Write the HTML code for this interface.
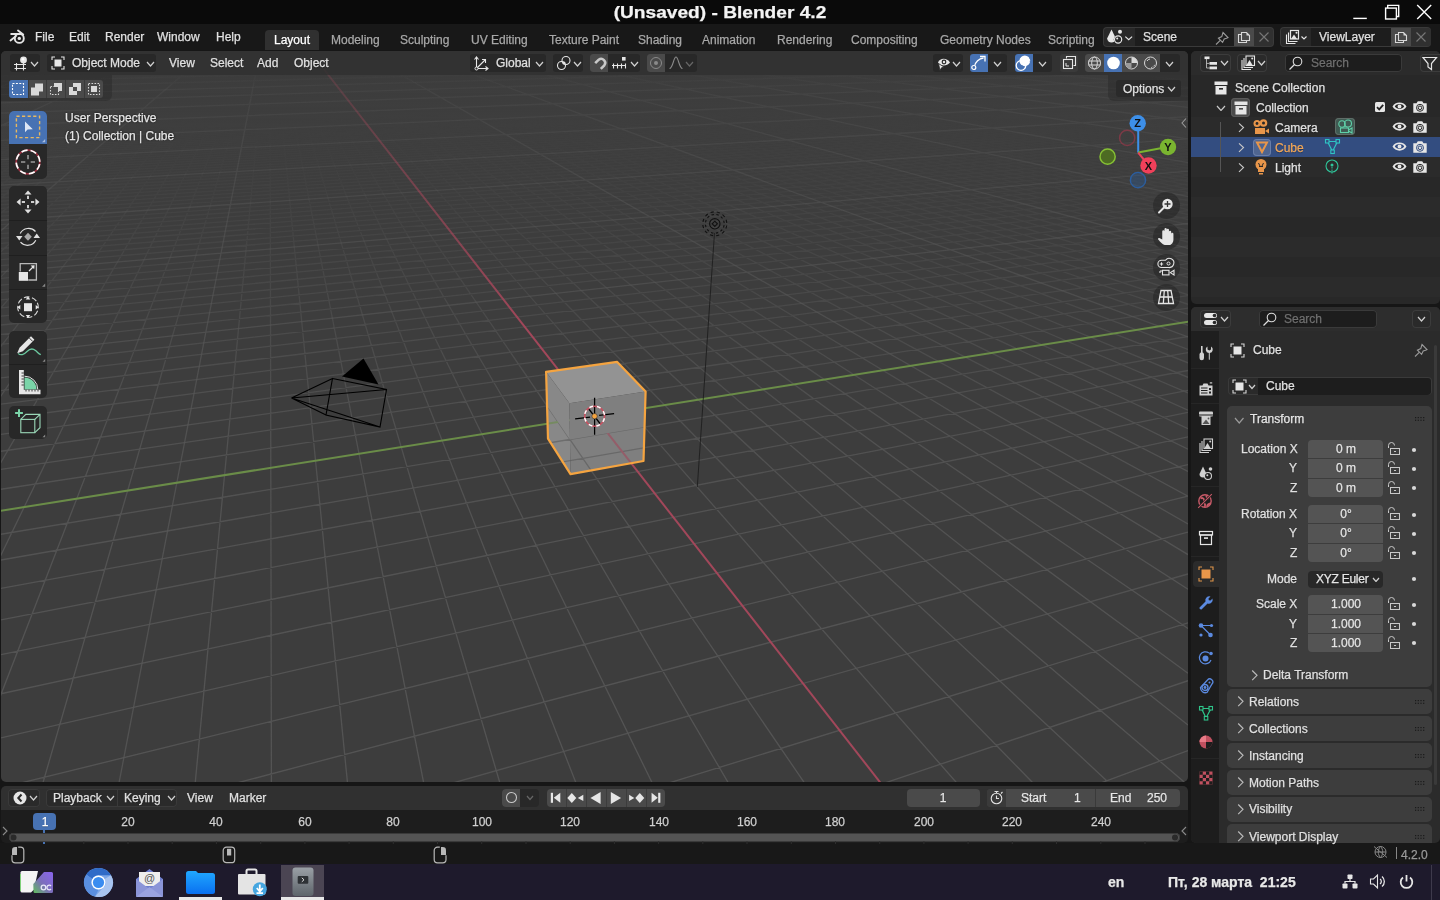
<!DOCTYPE html>
<html><head><meta charset="utf-8"><style>
html,body{margin:0;padding:0;width:1440px;height:900px;overflow:hidden;background:#161616;}
body{position:relative;font-family:"Liberation Sans", sans-serif;-webkit-font-smoothing:antialiased;}
body>div,body>svg{position:absolute;}
.t{position:absolute;white-space:nowrap;line-height:1;will-change:transform;text-shadow:0 1px 1px rgba(0,0,0,.35);-webkit-text-stroke:0.25px currentColor;}
</style></head><body>
<div style="left:0px;top:0px;width:1440px;height:24px;background:#0a0a0a;"></div>
<div class="t" style="top:4.17px;font-size:17.4px;color:#f4f4f4;font-weight:700;left:720px;transform:translateX(-50%);transform:translateX(-50%) scaleX(1.1);">(Unsaved) - Blender 4.2</div>
<svg style="left:1350px;top:3px;" width="90" height="20" viewBox="0 0 90 20"><g stroke="#fff" stroke-width="1.4" fill="none"><path d="M3.3 15.4H16.8"/><rect x="35.6" y="5.1" width="10.8" height="10.9"/><path d="M37.7 5V2.4H48.7V13.5H46.5"/><path d="M67.2 2L81.2 16M81.2 2L67.2 16"/></g></svg>
<div style="left:0px;top:24px;width:1440px;height:26px;background:#181818;"></div>
<div style="left:1px;top:51px;width:1187px;height:731px;background:#3d3d3d;border-radius:5px;"></div>
<svg style="left:0;top:0" width="1188" height="782" viewBox="0 0 1188 782"><defs><clipPath id="vpc"><rect x="1" y="51" width="1187" height="731" rx="5"/></clipPath></defs><g clip-path="url(#vpc)"><g id="gridg"><defs><linearGradient id="g1" gradientUnits="userSpaceOnUse" x1="0" y1="50" x2="0" y2="784"><stop offset="0.000" stop-color="#545454" stop-opacity="0.000"/><stop offset="0.014" stop-color="#545454" stop-opacity="0.000"/><stop offset="0.027" stop-color="#545454" stop-opacity="0.000"/><stop offset="0.041" stop-color="#545454" stop-opacity="0.004"/><stop offset="0.054" stop-color="#545454" stop-opacity="0.014"/><stop offset="0.068" stop-color="#545454" stop-opacity="0.024"/><stop offset="0.082" stop-color="#545454" stop-opacity="0.037"/><stop offset="0.095" stop-color="#545454" stop-opacity="0.052"/><stop offset="0.109" stop-color="#545454" stop-opacity="0.070"/><stop offset="0.136" stop-color="#545454" stop-opacity="0.112"/><stop offset="0.174" stop-color="#545454" stop-opacity="0.178"/><stop offset="0.211" stop-color="#545454" stop-opacity="0.255"/><stop offset="0.249" stop-color="#545454" stop-opacity="0.333"/><stop offset="0.286" stop-color="#545454" stop-opacity="0.416"/><stop offset="0.324" stop-color="#545454" stop-opacity="0.495"/><stop offset="0.361" stop-color="#545454" stop-opacity="0.574"/><stop offset="0.399" stop-color="#545454" stop-opacity="0.647"/><stop offset="0.436" stop-color="#545454" stop-opacity="0.717"/><stop offset="0.474" stop-color="#545454" stop-opacity="0.780"/><stop offset="0.511" stop-color="#545454" stop-opacity="0.840"/><stop offset="0.549" stop-color="#545454" stop-opacity="0.877"/><stop offset="0.586" stop-color="#545454" stop-opacity="0.900"/><stop offset="0.624" stop-color="#545454" stop-opacity="0.918"/><stop offset="0.661" stop-color="#545454" stop-opacity="0.934"/><stop offset="0.699" stop-color="#545454" stop-opacity="0.947"/><stop offset="0.736" stop-color="#545454" stop-opacity="0.958"/><stop offset="0.774" stop-color="#545454" stop-opacity="0.967"/><stop offset="0.811" stop-color="#545454" stop-opacity="0.974"/><stop offset="0.849" stop-color="#545454" stop-opacity="0.980"/><stop offset="0.886" stop-color="#545454" stop-opacity="0.984"/><stop offset="0.924" stop-color="#545454" stop-opacity="0.988"/><stop offset="0.961" stop-color="#545454" stop-opacity="0.991"/><stop offset="0.999" stop-color="#545454" stop-opacity="0.993"/></linearGradient><linearGradient id="g10" gradientUnits="userSpaceOnUse" x1="0" y1="50" x2="0" y2="784"><stop offset="0.000" stop-color="#565656" stop-opacity="0.000"/><stop offset="0.014" stop-color="#565656" stop-opacity="0.000"/><stop offset="0.027" stop-color="#565656" stop-opacity="0.019"/><stop offset="0.041" stop-color="#565656" stop-opacity="0.127"/><stop offset="0.054" stop-color="#565656" stop-opacity="0.259"/><stop offset="0.068" stop-color="#565656" stop-opacity="0.284"/><stop offset="0.082" stop-color="#565656" stop-opacity="0.309"/><stop offset="0.095" stop-color="#565656" stop-opacity="0.333"/><stop offset="0.109" stop-color="#565656" stop-opacity="0.356"/><stop offset="0.136" stop-color="#565656" stop-opacity="0.401"/><stop offset="0.174" stop-color="#565656" stop-opacity="0.457"/><stop offset="0.211" stop-color="#565656" stop-opacity="0.509"/><stop offset="0.249" stop-color="#565656" stop-opacity="0.555"/><stop offset="0.286" stop-color="#565656" stop-opacity="0.598"/><stop offset="0.324" stop-color="#565656" stop-opacity="0.635"/><stop offset="0.361" stop-color="#565656" stop-opacity="0.669"/><stop offset="0.399" stop-color="#565656" stop-opacity="0.697"/><stop offset="0.436" stop-color="#565656" stop-opacity="0.723"/><stop offset="0.474" stop-color="#565656" stop-opacity="0.744"/><stop offset="0.511" stop-color="#565656" stop-opacity="0.763"/><stop offset="0.549" stop-color="#565656" stop-opacity="0.779"/><stop offset="0.586" stop-color="#565656" stop-opacity="0.792"/><stop offset="0.624" stop-color="#565656" stop-opacity="0.803"/><stop offset="0.661" stop-color="#565656" stop-opacity="0.812"/><stop offset="0.699" stop-color="#565656" stop-opacity="0.820"/><stop offset="0.736" stop-color="#565656" stop-opacity="0.826"/><stop offset="0.774" stop-color="#565656" stop-opacity="0.831"/><stop offset="0.811" stop-color="#565656" stop-opacity="0.835"/><stop offset="0.849" stop-color="#565656" stop-opacity="0.838"/><stop offset="0.886" stop-color="#565656" stop-opacity="0.841"/><stop offset="0.924" stop-color="#565656" stop-opacity="0.843"/><stop offset="0.961" stop-color="#565656" stop-opacity="0.845"/><stop offset="0.999" stop-color="#565656" stop-opacity="0.846"/></linearGradient><linearGradient id="g100" gradientUnits="userSpaceOnUse" x1="0" y1="50" x2="0" y2="784"><stop offset="0.000" stop-color="#585858" stop-opacity="0.000"/><stop offset="0.014" stop-color="#585858" stop-opacity="0.000"/><stop offset="0.027" stop-color="#585858" stop-opacity="0.019"/><stop offset="0.041" stop-color="#585858" stop-opacity="0.127"/><stop offset="0.054" stop-color="#585858" stop-opacity="0.259"/><stop offset="0.068" stop-color="#585858" stop-opacity="0.284"/><stop offset="0.082" stop-color="#585858" stop-opacity="0.309"/><stop offset="0.095" stop-color="#585858" stop-opacity="0.333"/><stop offset="0.109" stop-color="#585858" stop-opacity="0.356"/><stop offset="0.136" stop-color="#585858" stop-opacity="0.401"/><stop offset="0.174" stop-color="#585858" stop-opacity="0.457"/><stop offset="0.211" stop-color="#585858" stop-opacity="0.509"/><stop offset="0.249" stop-color="#585858" stop-opacity="0.555"/><stop offset="0.286" stop-color="#585858" stop-opacity="0.598"/><stop offset="0.324" stop-color="#585858" stop-opacity="0.635"/><stop offset="0.361" stop-color="#585858" stop-opacity="0.669"/><stop offset="0.399" stop-color="#585858" stop-opacity="0.697"/><stop offset="0.436" stop-color="#585858" stop-opacity="0.723"/><stop offset="0.474" stop-color="#585858" stop-opacity="0.744"/><stop offset="0.511" stop-color="#585858" stop-opacity="0.763"/><stop offset="0.549" stop-color="#585858" stop-opacity="0.779"/><stop offset="0.586" stop-color="#585858" stop-opacity="0.792"/><stop offset="0.624" stop-color="#585858" stop-opacity="0.803"/><stop offset="0.661" stop-color="#585858" stop-opacity="0.812"/><stop offset="0.699" stop-color="#585858" stop-opacity="0.820"/><stop offset="0.736" stop-color="#585858" stop-opacity="0.826"/><stop offset="0.774" stop-color="#585858" stop-opacity="0.831"/><stop offset="0.811" stop-color="#585858" stop-opacity="0.835"/><stop offset="0.849" stop-color="#585858" stop-opacity="0.838"/><stop offset="0.886" stop-color="#585858" stop-opacity="0.841"/><stop offset="0.924" stop-color="#585858" stop-opacity="0.843"/><stop offset="0.961" stop-color="#585858" stop-opacity="0.845"/><stop offset="0.999" stop-color="#585858" stop-opacity="0.846"/></linearGradient></defs>
<path d="M-0.0 70.1L922.1 50.0M-0.0 70.5L936.0 50.0M0.0 70.9L949.8 50.0M0.0 71.8L977.5 50.0M-0.0 72.3L991.3 50.0M0.0 72.7L1005.2 50.0M-0.0 73.2L1019.0 50.0M-0.0 73.6L1032.8 50.0M0.0 74.1L1046.7 50.0M0.0 74.6L1060.5 50.0M-0.0 75.1L1074.3 50.0M0.0 75.5L1088.2 50.0M0.0 76.5L1115.9 50.0M0.0 77.1L1129.7 50.0M0.0 77.6L1143.5 50.0M-0.0 78.1L1157.3 50.0M0.0 78.6L1171.2 50.0M0.0 79.2L1185.0 50.0M0.0 79.7L1188.0 50.3M0.0 80.3L1188.0 50.6M0.0 80.8L1188.0 51.0M0.0 82.0L1188.0 51.7M-0.0 82.5L1188.0 52.1M0.0 83.1L1188.0 52.4M0.0 83.7L1188.0 52.8M0.0 84.3L1188.0 53.2M0.0 84.9L1188.0 53.6M0.0 85.6L1188.0 54.0M0.0 86.2L1188.0 54.4M-0.0 86.9L1188.0 54.8M0.0 88.2L1188.0 55.6M-0.0 88.8L1188.0 56.0M0.0 89.5L1188.0 56.5M0.0 90.2L1188.0 56.9M-0.0 90.9L1188.0 57.3M-0.0 91.7L1188.0 57.8M-0.0 92.4L1188.0 58.3M-0.0 93.1L1188.0 58.7M0.0 93.9L1188.0 59.2M0.0 95.4L1188.0 60.2M-0.0 96.2L1188.0 60.7M-0.0 97.0L1188.0 61.2M0.0 97.8L1188.0 61.7M-0.0 98.7L1188.0 62.2M0.0 99.5L1188.0 62.7M0.0 100.4L1188.0 63.3M-0.0 101.2L1188.0 63.8M0.0 102.1L1188.0 64.4M-0.0 104.0L1188.0 65.5M0.0 104.9L1188.0 66.1M0.0 105.9L1188.0 66.7M0.0 106.8L1188.0 67.3M0.0 107.8L1188.0 68.0M-0.0 108.8L1188.0 68.6M-0.0 109.9L1188.0 69.3M-0.0 110.9L1188.0 69.9M-0.0 112.0L1188.0 70.6M-0.0 114.2L1188.0 72.0M0.0 115.3L1188.0 72.7M0.0 116.5L1188.0 73.4M-0.0 117.7L1188.0 74.2M0.0 118.9L1188.0 74.9M-0.0 120.1L1188.0 75.7M-0.0 121.3L1188.0 76.5M0.0 122.6L1188.0 77.3M-0.0 123.9L1188.0 78.1M0.0 126.6L1188.0 79.8M0.0 128.0L1188.0 80.7M0.0 129.5L1188.0 81.6M-0.0 130.9L1188.0 82.5M0.0 132.4L1188.0 83.4M-0.0 133.9L1188.0 84.4M0.0 135.5L1188.0 85.4M-0.0 137.1L1188.0 86.4M0.0 138.7L1188.0 87.4M-0.0 142.1L1188.0 89.6M-0.0 143.9L1188.0 90.7M0.0 145.7L1188.0 91.8M-0.0 147.6L1188.0 93.0M-0.0 149.5L1188.0 94.2M-0.0 151.4L1188.0 95.4M-0.0 153.4L1188.0 96.7M-0.0 155.5L1188.0 98.0M-0.0 157.6L1188.0 99.3M-0.0 162.0L1188.0 102.0M-0.0 164.3L1188.0 103.5M-0.0 166.6L1188.0 105.0M80.1 50.0L0.0 71.1M-0.0 169.0L1188.0 106.5M85.0 50.0L-0.0 73.0M-0.0 171.5L1188.0 108.1M89.8 50.0L0.0 75.0M-0.0 174.1L1188.0 109.7M94.7 50.0L-0.0 77.0M-0.0 176.7L1188.0 111.3M99.6 50.0L0.0 79.3M-0.0 179.5L1188.0 113.1M104.4 50.0L0.0 81.6M-0.0 182.3L1188.0 114.8M109.3 50.0L-0.0 84.1M-0.0 188.2L1188.0 118.6M119.1 50.0L0.0 89.5M-0.0 191.3L1188.0 120.5M123.9 50.0L-0.0 92.5M0.0 194.5L1188.0 122.5M128.8 50.0L-0.0 95.7M0.0 197.8L1188.0 124.6M133.7 50.0L0.0 99.1M-0.0 201.2L1188.0 126.8M138.5 50.0L0.0 102.8M-0.0 204.8L1188.0 129.0M143.4 50.0L0.0 106.7M-0.0 208.5L1188.0 131.3M148.3 50.0L-0.0 111.0M-0.0 212.3L1188.0 133.7M153.1 50.0L0.0 115.6M-0.0 216.2L1188.0 136.2M158.0 50.0L-0.0 120.7M-0.0 224.6L1188.0 141.5M167.7 50.0L-0.0 132.2M0.0 229.0L1188.0 144.2M172.6 50.0L-0.0 138.8M-0.0 233.6L1188.0 147.1M177.5 50.0L-0.0 146.1M-0.0 238.4L1188.0 150.2M182.4 50.0L0.0 154.2M-0.0 243.4L1188.0 153.3M187.2 50.0L-0.0 163.3M-0.0 248.6L1188.0 156.6M192.1 50.0L0.0 173.5M-0.0 254.0L1188.0 160.0M197.0 50.0L-0.0 185.1M-0.0 259.7L1188.0 163.6M201.8 50.0L-0.0 198.4M-0.0 265.7L1188.0 167.3M206.7 50.0L-0.0 213.7M-0.0 278.4L1188.0 175.3M216.4 50.0L-0.0 252.6M-0.0 285.2L1188.0 179.6M221.3 50.0L-0.0 277.9M-0.0 292.4L1188.0 184.1M226.2 50.0L-0.0 308.9M-0.0 299.9L1188.0 188.9M231.0 50.0L-0.0 347.6M-0.0 307.9L1188.0 193.9M235.9 50.0L-0.0 397.4M-0.0 316.3L1188.0 199.2M240.8 50.0L-0.0 463.9M-0.0 325.1L1188.0 204.7M245.6 50.0L-0.0 557.0M-0.0 334.5L1188.0 210.6M250.5 50.0L-0.0 697.0M-0.0 344.4L1188.0 216.9M255.4 50.0L42.6 784.0M-0.0 366.1L1188.0 230.5M265.1 50.0L195.1 784.0M-0.0 378.0L1188.0 238.0M270.0 50.0L271.4 784.0M-0.0 390.7L1188.0 246.0M274.8 50.0L347.6 784.0M-0.0 404.3L1188.0 254.6M279.7 50.0L423.9 784.0M-0.0 418.9L1188.0 263.7M284.6 50.0L500.2 784.0M-0.0 434.5L1188.0 273.6M289.4 50.0L576.4 784.0M-0.0 451.4L1188.0 284.2M294.3 50.0L652.7 784.0M-0.0 469.6L1188.0 295.7M299.2 50.0L729.0 784.0M-0.0 489.4L1188.0 308.1M304.0 50.0L805.2 784.0M-0.0 534.4L1188.0 336.5M313.8 50.0L957.7 784.0M-0.0 560.2L1188.0 352.7M318.6 50.0L1034.0 784.0M-0.0 588.6L1188.0 370.5M323.5 50.0L1110.2 784.0M-0.0 620.0L1188.0 390.3M328.4 50.0L1186.5 784.0M-0.0 654.9L1188.0 412.3M333.2 50.0L1188.0 725.0M-0.0 694.0L1188.0 436.9M338.1 50.0L1188.0 673.3M-0.0 738.1L1188.0 464.6M343.0 50.0L1188.0 628.5M16.7 784.0L1188.0 496.1M347.8 50.0L1188.0 589.2M233.0 784.0L1188.0 532.2M352.7 50.0L1188.0 554.6M665.6 784.0L1188.0 622.8M362.4 50.0L1188.0 496.3M881.8 784.0L1188.0 680.7M367.3 50.0L1188.0 471.5M1098.1 784.0L1188.0 750.6M372.1 50.0L1188.0 449.1M377.0 50.0L1188.0 428.7M381.9 50.0L1188.0 410.1M386.7 50.0L1188.0 393.0M391.6 50.0L1188.0 377.3M396.5 50.0L1188.0 362.8M401.3 50.0L1188.0 349.4M411.1 50.0L1188.0 325.3M415.9 50.0L1188.0 314.5M420.8 50.0L1188.0 304.3M425.7 50.0L1188.0 294.8M430.5 50.0L1188.0 285.9M435.4 50.0L1188.0 277.5M440.2 50.0L1188.0 269.6M445.1 50.0L1188.0 262.1M450.0 50.0L1188.0 255.0M459.7 50.0L1188.0 242.0M464.6 50.0L1188.0 235.9M469.4 50.0L1188.0 230.2M474.3 50.0L1188.0 224.7M479.1 50.0L1188.0 219.5M484.0 50.0L1188.0 214.5M488.9 50.0L1188.0 209.7M493.7 50.0L1188.0 205.2M498.6 50.0L1188.0 200.8M508.3 50.0L1188.0 192.6M513.2 50.0L1188.0 188.8M518.0 50.0L1188.0 185.1M522.9 50.0L1188.0 181.5M527.8 50.0L1188.0 178.1M532.6 50.0L1188.0 174.8M537.5 50.0L1188.0 171.6M542.3 50.0L1188.0 168.6M547.2 50.0L1188.0 165.6M556.9 50.0L1188.0 160.0M561.8 50.0L1188.0 157.3M566.6 50.0L1188.0 154.7M571.5 50.0L1188.0 152.3M576.4 50.0L1188.0 149.8M581.2 50.0L1188.0 147.5M586.1 50.0L1188.0 145.2M590.9 50.0L1188.0 143.0M595.8 50.0L1188.0 140.9M605.5 50.0L1188.0 136.8M610.4 50.0L1188.0 134.9M615.2 50.0L1188.0 133.0M620.1 50.0L1188.0 131.1M625.0 50.0L1188.0 129.3M629.8 50.0L1188.0 127.6M634.7 50.0L1188.0 125.9M639.5 50.0L1188.0 124.2M644.4 50.0L1188.0 122.6M654.1 50.0L1188.0 119.5M659.0 50.0L1188.0 118.0M663.8 50.0L1188.0 116.6M668.7 50.0L1188.0 115.1M673.6 50.0L1188.0 113.8M678.4 50.0L1188.0 112.4M683.3 50.0L1188.0 111.1M688.1 50.0L1188.0 109.8M693.0 50.0L1188.0 108.5M702.7 50.0L1188.0 106.1M707.6 50.0L1188.0 104.9M712.4 50.0L1188.0 103.8M717.3 50.0L1188.0 102.6M722.1 50.0L1188.0 101.5M727.0 50.0L1188.0 100.5M731.8 50.0L1188.0 99.4M736.7 50.0L1188.0 98.4M741.6 50.0L1188.0 97.4M751.3 50.0L1188.0 95.4M756.1 50.0L1188.0 94.4M761.0 50.0L1188.0 93.5M765.8 50.0L1188.0 92.6M770.7 50.0L1188.0 91.7M775.6 50.0L1188.0 90.8M780.4 50.0L1188.0 89.9M785.3 50.0L1188.0 89.1M790.1 50.0L1188.0 88.3M799.8 50.0L1188.0 86.6M804.7 50.0L1188.0 85.9M809.5 50.0L1188.0 85.1M814.4 50.0L1188.0 84.3M819.3 50.0L1188.0 83.6M824.1 50.0L1188.0 82.8M829.0 50.0L1188.0 82.1M833.8 50.0L1188.0 81.4M838.7 50.0L1188.0 80.7M848.4 50.0L1188.0 79.4M853.2 50.0L1188.0 78.7M858.1 50.0L1188.0 78.1M862.9 50.0L1188.0 77.4M867.8 50.0L1188.0 76.8M872.7 50.0L1188.0 76.2M877.5 50.0L1188.0 75.6M882.4 50.0L1188.0 75.0M887.2 50.0L1188.0 74.4M896.9 50.0L1188.0 73.2M901.8 50.0L1188.0 72.7M906.6 50.0L1188.0 72.1M911.5 50.0L1188.0 71.6M916.3 50.0L1188.0 71.0M921.2 50.0L1188.0 70.5" stroke="url(#g1)" stroke-width="1.3" fill="none"/>
<path d="M0.0 54.6L270.5 50.0M0.0 57.3L409.3 50.0M-0.0 60.3L548.0 50.0M-0.0 63.6L686.6 50.0M0.0 67.2L825.2 50.0M0.0 71.4L963.6 50.0M-0.0 76.0L1102.0 50.0M0.0 81.4L1188.0 51.3M-0.0 87.5L1188.0 55.2M0.0 103.0L1188.0 65.0M0.0 113.1L1188.0 71.3M0.0 125.3L1188.0 79.0M-0.0 140.4L1188.0 88.5M16.8 50.0L0.0 53.3M-0.0 159.7L1188.0 100.6M65.5 50.0L0.0 66.0M0.0 185.2L1188.0 116.7M114.2 50.0L-0.0 86.7M-0.0 220.3L1188.0 138.8M162.9 50.0L-0.0 126.2M-0.0 271.9L1188.0 171.2M211.6 50.0L-0.0 231.5M-0.0 354.9L1188.0 223.5M260.2 50.0L118.8 784.0M449.3 784.0L1188.0 574.0M357.6 50.0L1188.0 523.9M406.2 50.0L1188.0 336.9M454.8 50.0L1188.0 248.3M503.5 50.0L1188.0 196.6M552.1 50.0L1188.0 162.7M600.7 50.0L1188.0 138.8M649.3 50.0L1188.0 121.0M697.8 50.0L1188.0 107.3M746.4 50.0L1188.0 96.4M843.5 50.0L1188.0 80.0M892.1 50.0L1188.0 73.8M940.6 50.0L1188.0 68.5M989.1 50.0L1188.0 63.8M1037.6 50.0L1188.0 59.8M1086.1 50.0L1188.0 56.2M1134.6 50.0L1188.0 53.1M1183.1 50.0L1188.0 50.3" stroke="url(#g10)" stroke-width="1.3" fill="none"/>
<path d="M-0.0 52.1L131.6 50.0M-0.0 94.6L1188.0 59.7M795.0 50.0L1188.0 87.4" stroke="url(#g100)" stroke-width="1.3" fill="none"/><defs><linearGradient id="gx" gradientUnits="userSpaceOnUse" x1="0" y1="66" x2="0" y2="330"><stop offset="0" stop-color="#9a4656" stop-opacity="0.25"/><stop offset="1" stop-color="#a2475a" stop-opacity="1"/></linearGradient></defs>
<path d="M323.7 69.0L886.1 790.0" stroke="url(#gx)" stroke-width="2" fill="none"/>
<path d="M-2618.2 928.0L2354.7 135.8" stroke="#6a8c48" stroke-width="2" fill="none"/></g><polygon points="546.1,371.8 617.2,361.9 645.6,391.6 569.4,403.2" fill="#939393"/>
<polygon points="546.1,371.8 569.4,403.2 570.5,474.2 548.0,438.7" fill="#888888"/>
<polygon points="569.4,403.2 645.6,391.6 643.5,461.0 570.5,474.2" fill="#7f7f7f"/>
<defs><clipPath id="lowc"><polygon points="547.1,405.9 570.0,439.5 644.5,427.0 643.5,461.0 570.5,474.2 548.0,438.7"/></clipPath></defs><use href="#gridg" clip-path="url(#lowc)" opacity=".6"/>
<polygon points="546.1,371.8 617.2,361.9 645.6,391.6 643.5,461.0 570.5,474.2 548.0,438.7" fill="none" stroke="#f5a440" stroke-width="2.2" stroke-linejoin="round"/>
<g transform="translate(594.6 416.2)"><path d="M0 -18.5V18.5M-19.5 2.6L-4.5 .9M4.5 -.9L19.5 -2.6M-5.8 -7.2L5.8 7.8" stroke="#000" stroke-width="1.25"/><circle r="10" fill="none" stroke="#c85060" stroke-width="1.5"/><circle r="10" fill="none" stroke="#fff" stroke-width="1.5" stroke-dasharray="3.93 3.93" transform="rotate(12)"/><circle r="2.7" fill="#f5a440" stroke="#333" stroke-width=".6"/></g>
<path d="M291.5 398.0L332.5 378.5M291.5 398.0L386.5 389.5M291.5 398.0L380.0 427.0M291.5 398.0L326.0 415.0M291.5 398.0M332.5 378.5L386.5 389.5L380.0 427.0L326.0 415.0Z" stroke="#000" stroke-width="1.1" fill="none"/>
<polygon points="342,376.5 363.5,358.5 378.5,384.5" fill="#000"/>
<path d="M714.5 232.8L697.3 487.1" stroke="#1a1a1a" stroke-width="1" fill="none" opacity=".8"/>
<g transform="translate(714.8 223.8)" fill="none" stroke="#111" stroke-width="1.1"><circle r="12" stroke-dasharray="3.14 3.14" transform="rotate(8)"/><circle r="9.4" stroke-dasharray="2.46 2.46" transform="rotate(8)"/><circle r="5.2"/><path d="M0 -2.6L2.6 0L0 2.6L-2.6 0Z"/></g></g></svg>
<div style="left:1px;top:51px;width:1187px;height:24px;background:rgba(48,48,48,0.78);border-radius:5px 5px 0 0;"></div>
<div style="left:1191px;top:51px;width:249px;height:253px;background:#282828;border-radius:5px;overflow:hidden;"></div>
<div style="left:1191px;top:51px;width:249px;height:24px;background:#2b2b2b;border-radius:5px 5px 0 0;"></div>
<div style="left:1191px;top:307px;width:249px;height:536px;background:#2b2b2b;border-radius:5px;"></div>
<div style="left:1191px;top:307px;width:249px;height:24px;background:#2d2d2d;border-radius:5px 5px 0 0;"></div>
<div style="left:1191px;top:331px;width:28px;height:512px;background:#1d1d1d;border-radius:0 0 0 5px;"></div>
<div style="left:1px;top:786px;width:1187px;height:57px;background:#1d1d1d;border-radius:5px;"></div>
<div style="left:1px;top:786px;width:1187px;height:24px;background:#303030;border-radius:5px 5px 0 0;"></div>
<div style="left:0px;top:843px;width:1440px;height:21px;background:#181818;"></div>
<div style="left:0px;top:864px;width:1440px;height:36px;background:#1e1a2c;"></div>
<svg style="left:6px;top:28px;" width="24" height="20" viewBox="0 0 24 20"><g fill="none" stroke="#e6e6e6" stroke-width="1.9" stroke-linecap="round"><circle cx="13.3" cy="10.4" r="4.5"/><path d="M12 2.6L17.2 6.6M5.2 6H14M4.5 12.4L9.8 8.2"/></g><circle cx="13.3" cy="10.4" r="1.7" fill="#e6e6e6"/></svg>
<div class="t" style="top:30.94px;font-size:12px;color:#e0e0e0;left:35.4px;">File</div>
<div class="t" style="top:30.94px;font-size:12px;color:#e0e0e0;left:69.4px;">Edit</div>
<div class="t" style="top:30.94px;font-size:12px;color:#e0e0e0;left:105.4px;">Render</div>
<div class="t" style="top:30.94px;font-size:12px;color:#e0e0e0;left:157px;">Window</div>
<div class="t" style="top:30.94px;font-size:12px;color:#e0e0e0;left:216px;">Help</div>
<div style="left:265.3px;top:30.3px;width:53.3px;height:19.7px;background:#303030;border-radius:4px 4px 0 0;"></div>
<div class="t" style="top:34.04px;font-size:12px;color:#ffffff;left:274.4px;">Layout</div>
<div class="t" style="top:34.04px;font-size:12px;color:#a8a8a8;left:330.5px;">Modeling</div>
<div class="t" style="top:34.04px;font-size:12px;color:#a8a8a8;left:400.3px;">Sculpting</div>
<div class="t" style="top:34.04px;font-size:12px;color:#a8a8a8;left:471.4px;">UV Editing</div>
<div class="t" style="top:34.04px;font-size:12px;color:#a8a8a8;left:548.6px;">Texture Paint</div>
<div class="t" style="top:34.04px;font-size:12px;color:#a8a8a8;left:638.3px;">Shading</div>
<div class="t" style="top:34.04px;font-size:12px;color:#a8a8a8;left:702.3px;">Animation</div>
<div class="t" style="top:34.04px;font-size:12px;color:#a8a8a8;left:777.3px;">Rendering</div>
<div class="t" style="top:34.04px;font-size:12px;color:#a8a8a8;left:851px;">Compositing</div>
<div class="t" style="top:34.04px;font-size:12px;color:#a8a8a8;left:940.3px;">Geometry Nodes</div>
<div class="t" style="top:34.04px;font-size:12px;color:#a8a8a8;left:1048.3px;">Scripting</div>
<div style="left:1096px;top:28px;width:7px;height:22px;background:#181818;"></div>
<div style="left:1103.1px;top:27.3px;width:170.7px;height:19.3px;background:#3a3a3a;border-radius:4px;"></div>
<div style="left:1104.1px;top:28.3px;width:30.9px;height:17.3px;background:#282828;border-radius:3px 0 0 3px;"></div>
<div style="left:1135px;top:28.3px;width:99px;height:17.3px;background:#1d1d1d;"></div>
<div style="left:1234px;top:28.3px;width:20px;height:17.3px;background:#4a4a4a;"></div>
<div style="left:1254px;top:28.3px;width:18.8px;height:17.3px;background:#303030;border-radius:0 3px 3px 0;"></div>
<svg style="left:1105px;top:28px;" width="30" height="17" viewBox="0 0 30 17"><g fill="#e6e6e6"><path d="M6.5 1.5L10.8 10.3A4.3 4.3 0 0 1 2.2 10.3Z"/><circle cx="15" cy="3.8" r="2"/></g><circle cx="13.1" cy="11.5" r="4.3" fill="#282828"/><circle cx="13.1" cy="11.5" r="3.6" fill="none" stroke="#e6e6e6" stroke-width="1.2"/><circle cx="12.2" cy="10.6" r="1" fill="#e6e6e6"/><path d="M20.3 8.6L23.7 11.6L27.1 8.6" fill="none" stroke="#e6e6e6" stroke-width="1.2"/></svg>
<div class="t" style="top:30.64px;font-size:12px;color:#e0e0e0;left:1142.5px;">Scene</div>
<svg style="left:1237px;top:30px;" width="14" height="14" viewBox="0 0 14 14"><g fill="none" stroke="#d8d8d8" stroke-width="1.1"><path d="M4.5 2.5H9.5L12.5 5.5V10.5H4.5Z"/><path d="M4.5 4.5H1.5V12.5H9.5V10.5"/></g><path d="M9.5 2.5V5.5H12.5Z" fill="#d8d8d8"/></svg>
<svg style="left:1258px;top:31px;" width="12" height="12" viewBox="0 0 12 12"><path d="M1.5 1.5L10.5 10.5M10.5 1.5L1.5 10.5" stroke="#777" stroke-width="1.1"/></svg>
<svg style="left:1214px;top:30px;" width="17" height="15" viewBox="0 0 17 15"><g fill="none" stroke="#9a9a9a" stroke-width="1.1"><path d="M9 2.5L14 7.5L12.6 8.2L10.2 9L8.6 12.4L4.4 8.2L7.8 6.6L8.5 4.2Z"/><path d="M6.5 10.2L2 14.5"/></g></svg>
<div style="left:1280.4px;top:27.3px;width:151.1px;height:19.3px;background:#3a3a3a;border-radius:4px;"></div>
<div style="left:1281.4px;top:28.3px;width:29.9px;height:17.3px;background:#282828;border-radius:3px 0 0 3px;"></div>
<div style="left:1311.3px;top:28.3px;width:79.9px;height:17.3px;background:#1d1d1d;"></div>
<div style="left:1391.2px;top:28.3px;width:19.8px;height:17.3px;background:#4a4a4a;"></div>
<div style="left:1411px;top:28.3px;width:19.5px;height:17.3px;background:#303030;border-radius:0 3px 3px 0;"></div>
<svg style="left:1284px;top:29px;" width="26" height="16" viewBox="0 0 26 16"><g fill="none" stroke="#e6e6e6" stroke-width="1.1"><path d="M2.5 5.5V14.5H11.5"/><path d="M4.5 3.5V12.5H13.5"/></g><rect x="6.5" y="1.5" width="8" height="8.5" fill="#282828" stroke="#e6e6e6" stroke-width="1.2"/><path d="M7 10L10 5.5L13 10Z" fill="#e6e6e6"/><circle cx="12.5" cy="3.8" r="1" fill="#e6e6e6"/><path d="M17.5 7.5L20 10L22.5 7.5" fill="none" stroke="#e6e6e6" stroke-width="1.1"/></svg>
<div class="t" style="top:30.64px;font-size:12px;color:#e0e0e0;left:1318.8px;">ViewLayer</div>
<svg style="left:1394.2px;top:30px;" width="14" height="14" viewBox="0 0 14 14"><g fill="none" stroke="#d8d8d8" stroke-width="1.1"><path d="M4.5 2.5H9.5L12.5 5.5V10.5H4.5Z"/><path d="M4.5 4.5H1.5V12.5H9.5V10.5"/></g><path d="M9.5 2.5V5.5H12.5Z" fill="#d8d8d8"/></svg>
<svg style="left:1415px;top:31px;" width="12" height="12" viewBox="0 0 12 12"><path d="M1.5 1.5L10.5 10.5M10.5 1.5L1.5 10.5" stroke="#777" stroke-width="1.1"/></svg>
<div style="left:10px;top:54.3px;width:30px;height:17.3px;background:#282828;border-radius:3px;"></div>
<svg style="left:13px;top:55px;" width="17" height="16" viewBox="0 0 17 16"><g fill="none" stroke="#e6e6e6" stroke-width="1.1"><path d="M1 9.5H13M1.5 13.5H13M3.5 8V15.5M10.5 8V15.5"/></g><circle cx="10.5" cy="5" r="3.4" fill="#e6e6e6"/><circle cx="10" cy="4.3" r="1.2" fill="#fff"/></svg>
<svg style="left:30px;top:61px;" width="9" height="6" viewBox="0 0 9 6"><path d="M1 1L4.5 5L8 1" fill="none" stroke="#d0d0d0" stroke-width="1.2"/></svg>
<div style="left:47.2px;top:54.3px;width:108.6px;height:17.3px;background:#282828;border-radius:3px;"></div>
<svg style="left:51px;top:56px;" width="14" height="14" viewBox="0 0 14 14"><g fill="none" stroke="#e6e6e6" stroke-width="1.1"><path d="M1 4V1H4M10 1H13V4M13 10V13H10M4 13H1V10"/></g><rect x="3.5" y="3.5" width="7" height="7" fill="#e6e6e6"/></svg>
<div class="t" style="top:57.14px;font-size:12px;color:#e0e0e0;left:72.2px;">Object Mode</div>
<svg style="left:145.5px;top:61px;" width="9" height="6" viewBox="0 0 9 6"><path d="M1 1L4.5 5L8 1" fill="none" stroke="#d0d0d0" stroke-width="1.2"/></svg>
<div class="t" style="top:57.14px;font-size:12px;color:#e0e0e0;left:169.4px;">View</div>
<div class="t" style="top:57.14px;font-size:12px;color:#e0e0e0;left:210.4px;">Select</div>
<div class="t" style="top:57.14px;font-size:12px;color:#e0e0e0;left:257.3px;">Add</div>
<div class="t" style="top:57.14px;font-size:12px;color:#e0e0e0;left:294.4px;">Object</div>
<div style="left:470.4px;top:54.3px;width:75.2px;height:17.3px;background:#282828;border-radius:3px;"></div>
<svg style="left:473px;top:55px;" width="16" height="16" viewBox="0 0 16 16"><g fill="none" stroke="#e6e6e6" stroke-width="1.1"><path d="M3.5 2.5V13.5H14.5M3.5 13.5L12.5 4.5"/><path d="M1.5 4.5L3.5 2L5.5 4.5M12.5 11.5L15 13.5L12.5 15.5M9 4.5H12.5V8"/></g><circle cx="3.5" cy="13.5" r="1.5" fill="#282828" stroke="#e6e6e6"/></svg>
<div class="t" style="top:57.14px;font-size:12px;color:#e0e0e0;left:495.6px;">Global</div>
<svg style="left:535px;top:61px;" width="9" height="6" viewBox="0 0 9 6"><path d="M1 1L4.5 5L8 1" fill="none" stroke="#d0d0d0" stroke-width="1.2"/></svg>
<div style="left:553.2px;top:54.3px;width:29.5px;height:17.3px;background:#282828;border-radius:3px;"></div>
<svg style="left:556px;top:55px;" width="16" height="16" viewBox="0 0 16 16"><g fill="none" stroke="#e6e6e6" stroke-width="1.1"><circle cx="10" cy="5.5" r="4"/><circle cx="5.5" cy="10.5" r="4"/></g><circle cx="8" cy="8" r="1.5" fill="#e6e6e6"/></svg>
<svg style="left:572.5px;top:61px;" width="9" height="6" viewBox="0 0 9 6"><path d="M1 1L4.5 5L8 1" fill="none" stroke="#d0d0d0" stroke-width="1.2"/></svg>
<div style="left:590.2px;top:54.3px;width:49.5px;height:17.3px;background:#282828;border-radius:3px;"></div>
<div style="left:590.2px;top:54.3px;width:18.2px;height:17.3px;background:#4a4a4a;border-radius:3px 0 0 3px;"></div>
<svg style="left:592px;top:55px;" width="15" height="16" viewBox="0 0 15 16"><path d="M3.2 8.2L6.7 4.7A4 4 0 0 1 12.3 10.3L8.8 13.8" fill="none" stroke="#c8c8c8" stroke-width="2.6"/></svg>
<svg style="left:611px;top:56px;" width="18" height="14" viewBox="0 0 18 14"><g fill="none" stroke="#e6e6e6" stroke-width="1.1"><path d="M1 9.5H15M2.5 7.5V12.5M6.5 7.5V12.5M10.5 7.5V12.5M14.5 7.5V12.5"/></g><rect x="11" y="1" width="3.6" height="3.6" fill="#e6e6e6"/></svg>
<svg style="left:629.5px;top:61px;" width="9" height="6" viewBox="0 0 9 6"><path d="M1 1L4.5 5L8 1" fill="none" stroke="#d0d0d0" stroke-width="1.2"/></svg>
<div style="left:647.2px;top:54.3px;width:49.8px;height:17.3px;background:#282828;border-radius:3px;"></div>
<div style="left:647.2px;top:54.3px;width:18.2px;height:17.3px;background:#4a4a4a;border-radius:3px 0 0 3px;"></div>
<svg style="left:648px;top:55px;" width="16" height="16" viewBox="0 0 16 16"><circle cx="8" cy="8" r="5.5" fill="none" stroke="#8a8a8a" stroke-width="1"/><circle cx="8" cy="8" r="2" fill="#8a8a8a"/></svg>
<svg style="left:668px;top:55px;" width="16" height="16" viewBox="0 0 16 16"><path d="M1.5 13.5C5 13.5 5.5 2 8 2S11 13.5 14.5 13.5" fill="none" stroke="#8a8a8a" stroke-width="1.1"/></svg>
<svg style="left:685px;top:61px;" width="9" height="6" viewBox="0 0 9 6"><path d="M1 1L4.5 5L8 1" fill="none" stroke="#666" stroke-width="1.2"/></svg>
<div style="left:933.3px;top:54px;width:29.4px;height:17.7px;background:#282828;border-radius:3px;"></div>
<svg style="left:935px;top:55px;" width="18" height="16" viewBox="0 0 18 16"><path d="M3 7.5C5 2.5 12 2.5 15 7.5C12 11.5 5 11.5 3 7.5Z" fill="#e6e6e6"/><circle cx="9" cy="7" r="2.4" fill="#282828"/><circle cx="9" cy="7" r="1.2" fill="#e6e6e6"/><path d="M3.5 8.5L9 12L6.5 12.8L5 15.5Z" fill="#e6e6e6" stroke="#282828" stroke-width=".8"/></svg>
<svg style="left:952px;top:61px;" width="9" height="6" viewBox="0 0 9 6"><path d="M1 1L4.5 5L8 1" fill="none" stroke="#d0d0d0" stroke-width="1.2"/></svg>
<div style="left:970.1px;top:54px;width:37.2px;height:17.7px;background:#282828;border-radius:3px;"></div>
<div style="left:970.1px;top:54px;width:18.4px;height:17.7px;background:#4772b3;border-radius:3px 0 0 3px;"></div>
<svg style="left:970px;top:54px;" width="18" height="18" viewBox="0 0 18 18"><path d="M4.5 12.5C5.2 8 9 4.5 13.5 4" fill="none" stroke="#fff" stroke-width="1.3"/><path d="M10 2.5H15V7.5" fill="none" stroke="#fff" stroke-width="1.3"/><circle cx="3.8" cy="13.5" r="2" fill="#4772b3" stroke="#fff" stroke-width="1.2"/></svg>
<svg style="left:993px;top:61px;" width="9" height="6" viewBox="0 0 9 6"><path d="M1 1L4.5 5L8 1" fill="none" stroke="#d0d0d0" stroke-width="1.2"/></svg>
<div style="left:1015.2px;top:54px;width:37.3px;height:17.7px;background:#282828;border-radius:3px;"></div>
<div style="left:1015.2px;top:54px;width:18px;height:17.7px;background:#4772b3;border-radius:3px 0 0 3px;"></div>
<svg style="left:1015px;top:54px;" width="18" height="18" viewBox="0 0 18 18"><circle cx="6" cy="11.5" r="4.8" fill="none" stroke="#fff" stroke-width="1.3"/><circle cx="9.8" cy="6.8" r="5.4" fill="#fff"/><circle cx="9.8" cy="6.8" r="5.4" fill="none" stroke="#4772b3" stroke-width=".8" stroke-dasharray="1 9"/></svg>
<svg style="left:1038px;top:61px;" width="9" height="6" viewBox="0 0 9 6"><path d="M1 1L4.5 5L8 1" fill="none" stroke="#d0d0d0" stroke-width="1.2"/></svg>
<div style="left:1060.3px;top:54px;width:17.4px;height:17.7px;background:#3a3a3a;border-radius:3px;"></div>
<svg style="left:1061px;top:55px;" width="16" height="16" viewBox="0 0 16 16"><g fill="none" stroke="#e6e6e6" stroke-width="1.1"><path d="M5.5 3.5V1.5H14.5V10.5H12.5"/><rect x="2.5" y="4.5" width="9" height="9"/></g><path d="M5 8V11H8" fill="none" stroke="#e6e6e6" stroke-width="1"/></svg>
<div style="left:1085.1px;top:54px;width:94.9px;height:17.7px;background:#282828;border-radius:3px;"></div>
<div style="left:1085.1px;top:54px;width:74.9px;height:17.7px;background:#4a4a4a;border-radius:3px 0 0 3px;"></div>
<div style="left:1103.7px;top:54px;width:18.3px;height:17.7px;background:#4772b3;"></div>
<svg style="left:1086px;top:55px;" width="17" height="16" viewBox="0 0 17 16"><g fill="none" stroke="#d8d8d8" stroke-width="1"><circle cx="8.5" cy="8" r="6"/><ellipse cx="8.5" cy="8" rx="2.8" ry="6"/><path d="M2.5 6H14.5M2.5 10H14.5"/></g></svg>
<svg style="left:1104.5px;top:55px;" width="17" height="16" viewBox="0 0 17 16"><circle cx="8.5" cy="8" r="6.3" fill="#fff"/></svg>
<svg style="left:1123px;top:55px;" width="17" height="16" viewBox="0 0 17 16"><circle cx="8.5" cy="8" r="6" fill="none" stroke="#d8d8d8" stroke-width="1"/><path d="M8.5 2A6 6 0 0 1 14.5 8H8.5Z" fill="#d8d8d8"/><path d="M2.5 8A6 6 0 0 0 8.5 14V8Z" fill="#9a9a9a"/></svg>
<svg style="left:1142px;top:55px;" width="17" height="16" viewBox="0 0 17 16"><circle cx="8.5" cy="8" r="6" fill="none" stroke="#d8d8d8" stroke-width="1"/><path d="M5 6A4 4 0 0 1 8 4" fill="none" stroke="#d8d8d8"/><path d="M9 13L13 10" stroke="#d8d8d8" stroke-dasharray="1 1"/></svg>
<svg style="left:1165px;top:61px;" width="9" height="6" viewBox="0 0 9 6"><path d="M1 1L4.5 5L8 1" fill="none" stroke="#d0d0d0" stroke-width="1.2"/></svg>
<div style="left:1px;top:75px;width:111px;height:26px;background:rgba(40,40,40,0.45);border-radius:0 0 6px 0;"></div>
<div style="left:9px;top:80px;width:93.8px;height:18px;background:#4a4a4a;border-radius:3px;"></div>
<div style="left:9px;top:80px;width:18.7px;height:18px;background:#4772b3;border-radius:3px 0 0 3px;"></div>
<div style="left:27.7px;top:80px;width:0.6px;height:18px;background:#3a3a3a;"></div>
<div style="left:46.4px;top:80px;width:0.6px;height:18px;background:#3a3a3a;"></div>
<div style="left:65.2px;top:80px;width:0.6px;height:18px;background:#3a3a3a;"></div>
<div style="left:84px;top:80px;width:0.6px;height:18px;background:#3a3a3a;"></div>
<svg style="left:10px;top:81px;" width="17" height="16" viewBox="0 0 17 16"><rect x="2.5" y="2.5" width="11" height="11" fill="none" stroke="#fff" stroke-width="1.1" stroke-dasharray="2 1.4"/></svg>
<svg style="left:29px;top:81px;" width="17" height="16" viewBox="0 0 17 16"><path d="M6 2.5H14V10.5H10V14.5H2V6.5H6Z" fill="#d8d8d8"/></svg>
<svg style="left:47.5px;top:81px;" width="17" height="16" viewBox="0 0 17 16"><rect x="2.5" y="5.5" width="8" height="8" fill="none" stroke="#d8d8d8" stroke-width="1.1" stroke-dasharray="1.6 1.4"/><path d="M6 2H14V10H10V6H6Z" fill="#d8d8d8"/></svg>
<svg style="left:66.5px;top:81px;" width="17" height="16" viewBox="0 0 17 16"><path d="M6 2H14V10H10V14H2V6H6Z" fill="#d8d8d8"/><rect x="6" y="6" width="4" height="4" fill="#4a4a4a"/></svg>
<svg style="left:85.5px;top:81px;" width="17" height="16" viewBox="0 0 17 16"><rect x="2.5" y="2.5" width="11" height="11" fill="none" stroke="#d8d8d8" stroke-width="1.1" stroke-dasharray="1.6 1.4"/><rect x="5" y="5" width="6" height="6" fill="#d8d8d8"/></svg>
<div style="left:1108px;top:75px;width:80px;height:26px;background:rgba(40,40,40,0.45);border-radius:0 0 0 6px;"></div>
<div style="left:1116.3px;top:80.1px;width:64.5px;height:17.4px;background:#2a2a2a;border-radius:3px;"></div>
<div class="t" style="top:82.74px;font-size:12px;color:#e0e0e0;left:1123.2px;">Options</div>
<svg style="left:1167px;top:86px;" width="9" height="6" viewBox="0 0 9 6"><path d="M1 1L4.5 5L8 1" fill="none" stroke="#d0d0d0" stroke-width="1.2"/></svg>
<div class="t" style="top:111.64px;font-size:12px;color:#e6e6e6;left:65.3px;text-shadow:0 0 2px #000;">User Perspective</div>
<div class="t" style="top:129.64px;font-size:12px;color:#e6e6e6;left:65.3px;text-shadow:0 0 2px #000;">(1) Collection | Cube</div>
<div style="left:8.9px;top:110.7px;width:38.2px;height:68px;background:#282828;border-radius:5px;"></div>
<div style="left:8.9px;top:110.7px;width:38.2px;height:33.3px;background:#4772b3;border-radius:5px 5px 0 0;"></div>
<div style="left:9.2px;top:186.3px;width:37.5px;height:137px;background:#282828;border-radius:5px;"></div>
<div style="left:9.2px;top:220px;width:37.5px;height:1px;background:#1f1f1f;"></div>
<div style="left:9.2px;top:254.5px;width:37.5px;height:1px;background:#1f1f1f;"></div>
<div style="left:9.2px;top:289px;width:37.5px;height:1px;background:#1f1f1f;"></div>
<div style="left:9px;top:331px;width:37.7px;height:67.3px;background:#282828;border-radius:5px;"></div>
<div style="left:9px;top:364px;width:37.7px;height:1px;background:#1f1f1f;"></div>
<div style="left:9px;top:405.7px;width:37.7px;height:33.3px;background:#282828;border-radius:5px;"></div>
<svg style="left:0px;top:100px;" width="50" height="345" viewBox="0 0 50 345"><g transform="translate(0 -100)">
<rect x="16.4" y="116.2" width="23.2" height="21.4" fill="none" stroke="#e8b860" stroke-width="1.4" stroke-dasharray="3.2 2.4"/>
<path d="M25 121.5V132.2L27.6 129.4L32.8 129.2Z" fill="#dde6f5"/>
<path d="M45.2 139L42 142.2H45.2Z" fill="#a9bde0"/>
<circle cx="28" cy="162" r="11.8" fill="none" stroke="#9a3040" stroke-width="1.7"/>
<circle cx="28" cy="162" r="11.8" fill="none" stroke="#fff" stroke-width="1.7" stroke-dasharray="6.2 3.1" transform="rotate(10 28 162)"/>
<path d="M28 155V159.3M28 164.7V169M21 162H25.3M30.7 162H35" stroke="#9a9a9a" stroke-width="1.6"/>
<g fill="#e0e0e0">
<path d="M28 190.5L31.5 194.6H24.5ZM28 213.5L31.5 209.4H24.5ZM16.5 202L20.6 198.5V205.5ZM39.5 202L35.4 198.5V205.5Z"/>
<rect x="27.1" y="195.8" width="1.8" height="3.2"/><rect x="27.1" y="205" width="1.8" height="3.2"/><rect x="21.8" y="201.1" width="3.2" height="1.8"/><rect x="31" y="201.1" width="3.2" height="1.8"/></g>
<g fill="none" stroke="#e0e0e0" stroke-width="1.2"><path d="M20.2 233.5A9.4 9.4 0 0 1 35.5 231.5"/><path d="M35.8 240.2A9.4 9.4 0 0 1 20.5 242.2"/></g>
<path d="M28 232.8L31.8 236.8L28 240.8L24.2 236.8Z" fill="#a8a8a8"/>
<path d="M16 236H22.5L19.25 240.5ZM33.5 238H40L36.75 233.5Z" fill="#e0e0e0"/>
<path d="M20.2 271.5V263.6H36.4V280H28.2" fill="none" stroke="#b8b8b8" stroke-width="1.3"/>
<rect x="18.8" y="272" width="9.2" height="8.8" fill="#e6e6e6"/>
<path d="M29 271L33.5 266.5" stroke="#e6e6e6" stroke-width="1.3"/><path d="M34.6 265.2L34.2 269.2L30.6 265.6Z" fill="#e6e6e6"/>
<path d="M45.2 283.5L42 286.7H45.2Z" fill="#888"/>
<circle cx="28" cy="307.2" r="10.3" fill="none" stroke="#d8d8d8" stroke-width="1.1" stroke-dasharray="5.6 2.5" transform="rotate(-25 28 307.2)"/>
<rect x="24" y="303.2" width="8" height="8" fill="#e6e6e6"/>
<path d="M28 296.5L30.3 299.5H25.7ZM28 318L30.3 315H25.7ZM17.3 307.2L20.3 304.9V309.5ZM38.7 307.2L35.7 304.9V309.5Z" fill="#e6e6e6"/>
<path d="M19.5 347.8L31 336.3L34.4 339.7L22.9 351.2L17.2 353.3Z" fill="#e6e6e6"/><path d="M29.3 338L32.7 341.4" stroke="#282828" stroke-width=".9"/>
<path d="M18.2 353.3C20.5 356 24 354.5 27 351.5S33 348.5 35.5 350.5S38.5 354 40.8 354.6" fill="none" stroke="#6cc9a0" stroke-width="1.3"/>
<path d="M45.2 359L42.5 361.7H45.2Z" fill="#888"/>
<path d="M24.5 377.5A12 12 0 0 1 36.5 389.5H24.5Z" fill="#7ad4a8"/>
<path d="M24.5 376.2A13.3 13.3 0 0 1 37.8 389.5" fill="none" stroke="#e6e6e6" stroke-width="1"/>
<path d="M19 370V394.2H40.5V389.7H23.8V370Z" fill="#e6e6e6"/>
<path d="M21.5 373H23.8M21.5 376H23.8M21.5 379H23.8M21.5 382H23.8M21.5 385H23.8M26 391.5V389.7M29 391.5V389.7M32 391.5V389.7M35 391.5V389.7M38 391.5V389.7" stroke="#282828" stroke-width=".9"/>
<path d="M19 409.2V417M15.1 413.1H22.9" stroke="#7ad4a8" stroke-width="2"/>
<g fill="none" stroke="#9ad8b8" stroke-width="1.1"><rect x="20.8" y="419.4" width="14" height="13.3"/><path d="M20.8 419.4L25.8 414.4H40V427.7L34.8 432.7M34.8 419.4L40 414.4"/></g>
<path d="M45.2 434.5L42.5 437.2H45.2Z" fill="#888"/>
</g></svg>
<svg style="left:1095px;top:105px;" width="90" height="90" viewBox="0 0 90 90"><g transform="translate(-1095 -105)">
<circle cx="1127.2" cy="137.9" r="7.6" fill="none" stroke="#8c3a48" stroke-width="1.5" opacity=".8"/>
<circle cx="1138" cy="180.2" r="7.6" fill="none" stroke="#2c5e9e" stroke-width="1.5"/>
<circle cx="1138" cy="180.2" r="7" fill="#2c5e9e" opacity=".35"/>
<circle cx="1107.6" cy="156.7" r="7.6" fill="#4d6b22" stroke="#86c034" stroke-width="1.5"/>
<path d="M1138.2 152.6V123.2M1138.2 152.6L1168 147M1138.2 152.6L1148.5 165.5" stroke-width="2"/>
<path d="M1138.2 152.6V128" stroke="#3d8fe8" stroke-width="2"/>
<path d="M1138.2 152.6L1162 148" stroke="#7ab430" stroke-width="2"/>
<path d="M1138.2 152.6L1145 161" stroke="#e8425a" stroke-width="2"/>
<circle cx="1137.7" cy="123.2" r="8.2" fill="#3d8fe8"/>
<circle cx="1168" cy="147" r="8.2" fill="#7ab430"/>
<circle cx="1148.5" cy="165.5" r="8.2" fill="#f0405a"/>
<g font-family="Liberation Sans" font-weight="700" font-size="11" fill="#101010" text-anchor="middle">
<text x="1137.7" y="127.2">Z</text><text x="1168" y="151">Y</text><text x="1148.5" y="169.5">X</text></g>
</g></svg>
<svg style="left:1152.5px;top:192.4px;" width="27" height="27" viewBox="0 0 27 27"><circle cx="13.5" cy="13.5" r="13.5" fill="rgba(30,30,30,0.45)"/></svg>
<svg style="left:1152.5px;top:223px;" width="27" height="27" viewBox="0 0 27 27"><circle cx="13.5" cy="13.5" r="13.5" fill="rgba(30,30,30,0.45)"/></svg>
<svg style="left:1152.5px;top:253.5px;" width="27" height="27" viewBox="0 0 27 27"><circle cx="13.5" cy="13.5" r="13.5" fill="rgba(30,30,30,0.45)"/></svg>
<svg style="left:1152.5px;top:283.5px;" width="27" height="27" viewBox="0 0 27 27"><circle cx="13.5" cy="13.5" r="13.5" fill="rgba(30,30,30,0.45)"/></svg>
<svg style="left:1156px;top:196px;" width="20" height="20" viewBox="0 0 20 20"><circle cx="11.5" cy="8" r="5.2" fill="#e6e6e6"/><path d="M8 11.5L3 16.5" stroke="#e6e6e6" stroke-width="2" stroke-linecap="round"/><path d="M11.5 5V11M8.5 8H14.5" stroke="#333" stroke-width="1.3"/></svg>
<svg style="left:1150px;top:220px;" width="30" height="30" viewBox="0 0 30 30"><g transform="translate(5.2 3.6) scale(.86)"><path d="M9 24C6 21.5 4.5 19.5 3.5 18.5C2.8 17.7 3.6 16.4 4.8 16.8L8.2 18.6V9A1.3 1.3 0 0 1 10.8 9V15.5V6.5A1.3 1.3 0 0 1 13.4 6.5V15V7.2A1.3 1.3 0 0 1 16 7.2V15.5V9.5A1.3 1.3 0 0 1 18.6 9.5V15.5V12A1.3 1.3 0 0 1 21.2 12V18.5C21.2 22 19 25 16 25H11Z" fill="#e6e6e6"/></g></svg>
<svg style="left:1150px;top:250px;" width="30" height="30" viewBox="0 0 30 30"><g fill="none" stroke="#e6e6e6" stroke-width="1.1"><path d="M11.5 17.5A3.6 3.6 0 0 1 11.5 10.3H15.5A4.6 4.6 0 1 1 18.5 17.5Z"/><rect x="12.5" y="20.3" width="6.5" height="4.6"/><path d="M20.3 22.6L24 20.3V25Z"/><path d="M10 21H12.5M10 21V23"/></g><path d="M11.5 12.3V15.7M9.8 14H13.2" stroke="#e6e6e6" stroke-width="1"/><circle cx="18.5" cy="13.5" r="1.5" fill="none" stroke="#e6e6e6" stroke-width="1"/></svg>
<svg style="left:1156px;top:287px;" width="20" height="20" viewBox="0 0 20 20"><g fill="none" stroke="#e6e6e6" stroke-width="1.3"><path d="M5 3.5H15L17.5 16.5H2.5Z"/><path d="M3.8 10H16.2M8.3 3.5L7.3 16.5M11.7 3.5L12.7 16.5"/></g></svg>
<svg style="left:1180px;top:117px;" width="8" height="12" viewBox="0 0 8 12"><path d="M6 1.5L2 6L6 10.5" fill="none" stroke="#9a9a9a" stroke-width="1.1"/></svg>
<div style="left:1199.5px;top:53.6px;width:31px;height:18.7px;background:#2a2a2a;border-radius:4px;box-shadow:inset 0 0 0 1px #3c3c3c;"></div>
<svg style="left:1203px;top:55px;" width="17" height="16" viewBox="0 0 17 16"><g fill="#e6e6e6"><rect x="1.5" y="1.5" width="5" height="2.6"/><rect x="6.5" y="7" width="7.5" height="2.8"/><rect x="6.5" y="11.5" width="7.5" height="2.8"/></g><path d="M3.5 4V13H6.5M3.5 8.4H6.5" fill="none" stroke="#bbb" stroke-width=".9"/></svg>
<svg style="left:1220px;top:60px;" width="9" height="6" viewBox="0 0 9 6"><path d="M1 1L4.5 5L8 1" fill="none" stroke="#d0d0d0" stroke-width="1.2"/></svg>
<div style="left:1236.5px;top:53.6px;width:30.8px;height:18.7px;background:#2a2a2a;border-radius:4px;box-shadow:inset 0 0 0 1px #3c3c3c;"></div>
<svg style="left:1240px;top:55px;" width="18" height="16" viewBox="0 0 18 16"><g fill="none" stroke="#e6e6e6" stroke-width="1.1"><path d="M2 5V14.5H11"/><path d="M4 3V12.5H13"/></g><rect x="6" y="1" width="8.5" height="9.5" fill="#2a2a2a" stroke="#e6e6e6" stroke-width="1.1"/><path d="M6.5 10L9.5 5L12.5 10Z" fill="#e6e6e6"/><circle cx="12.2" cy="3.5" r="1" fill="#e6e6e6"/></svg>
<svg style="left:1257px;top:60px;" width="9" height="6" viewBox="0 0 9 6"><path d="M1 1L4.5 5L8 1" fill="none" stroke="#d0d0d0" stroke-width="1.2"/></svg>
<div style="left:1284.6px;top:53.6px;width:117.6px;height:18.7px;background:#1d1d1d;border-radius:4px;box-shadow:inset 0 0 0 1px #3a3a3a;"></div>
<svg style="left:1288px;top:55px;" width="16" height="16" viewBox="0 0 16 16"><circle cx="9.5" cy="6.5" r="4.3" fill="none" stroke="#ddd" stroke-width="1.1"/><path d="M6.5 9.5L1.5 14.5" stroke="#ddd" stroke-width="1.2"/></svg>
<div class="t" style="top:56.64px;font-size:12px;color:#6f6f6f;left:1310.7px;">Search</div>
<div style="left:1420px;top:53.6px;width:25px;height:18.7px;background:#2a2a2a;border-radius:4px;box-shadow:inset 0 0 0 1px #3c3c3c;"></div>
<svg style="left:1421px;top:55px;" width="19" height="16" viewBox="0 0 19 16"><path d="M2 2.5H15.5L10.5 8.5V14.5L7 12V8.5Z" fill="none" stroke="#e6e6e6" stroke-width="1.2"/></svg>
<div style="left:1191px;top:116.5px;width:249px;height:20px;background:#2b2b2b;"></div>
<div style="left:1191px;top:156.5px;width:249px;height:20px;background:#2b2b2b;"></div>
<div style="left:1191px;top:196.5px;width:249px;height:20px;background:#2b2b2b;"></div>
<div style="left:1191px;top:236.5px;width:249px;height:20px;background:#2b2b2b;"></div>
<div style="left:1191px;top:276.5px;width:249px;height:20px;background:#2b2b2b;"></div>
<div style="left:1191px;top:136.9px;width:249px;height:20.2px;background:#334d80;"></div>
<svg style="left:1212.5px;top:79.5px;" width="16" height="16" viewBox="0 0 16 16"><rect x="1.5" y="1.5" width="13" height="3.5" fill="#e6e6e6"/><rect x="2.5" y="6" width="11" height="8.5" fill="#e6e6e6"/><rect x="6" y="8" width="4" height="1.6" fill="#282828"/></svg>
<div class="t" style="top:81.54px;font-size:12px;color:#e0e0e0;left:1235px;">Scene Collection</div>
<svg style="left:1215.5px;top:104.5px;" width="10" height="6.5" viewBox="0 0 10 6.5"><path d="M1 1L5 5.5L9 1" fill="none" stroke="#c8c8c8" stroke-width="1.2"/></svg>
<div style="left:1231.4px;top:98.2px;width:19px;height:18.6px;background:#4a4a4a;border-radius:4px;box-shadow:inset 0 0 0 1px #5a5a5a;"></div>
<svg style="left:1233px;top:99.5px;" width="16" height="16" viewBox="0 0 16 16"><rect x="1.5" y="1.5" width="13" height="3.5" fill="#e6e6e6"/><rect x="2.5" y="6" width="11" height="8.5" fill="#e6e6e6"/><rect x="6" y="8" width="4" height="1.6" fill="#4a4a4a"/></svg>
<div class="t" style="top:102.24px;font-size:12px;color:#e0e0e0;left:1255.5px;">Collection</div>
<div style="left:1374.9px;top:102px;width:10.1px;height:10px;background:#e6e6e6;border-radius:1.5px;"></div>
<svg style="left:1374.9px;top:102px;" width="10" height="10" viewBox="0 0 10 10"><path d="M2 5.2L4.2 7.4L8.2 2.8" fill="none" stroke="#222" stroke-width="1.8"/></svg>
<svg style="left:1391px;top:100px;" width="17" height="13" viewBox="0 0 17 13"><path d="M1.5 6.5C4 1 13 1 15.5 6.5C13 12 4 12 1.5 6.5Z" fill="#e6e6e6"/><path d="M3.8 6.5C5.8 3.3 11.2 3.3 13.2 6.5C11.2 9.7 5.8 9.7 3.8 6.5Z" fill="#282828"/><circle cx="8.5" cy="6.5" r="1.9" fill="#e6e6e6"/></svg>
<svg style="left:1411.5px;top:99.8px;" width="16" height="14" viewBox="0 0 16 14"><path d="M1.3 3.3H4.5L5.8 1.3H10.2L11.5 3.3H14.7V12.8H1.3Z" fill="#e6e6e6"/><circle cx="8" cy="7.8" r="3.5" fill="none" stroke="#282828" stroke-width="1"/><circle cx="8" cy="7.8" r="1.8" fill="none" stroke="#282828" stroke-width="1"/></svg>
<svg style="left:1391px;top:120px;" width="17" height="13" viewBox="0 0 17 13"><path d="M1.5 6.5C4 1 13 1 15.5 6.5C13 12 4 12 1.5 6.5Z" fill="#e6e6e6"/><path d="M3.8 6.5C5.8 3.3 11.2 3.3 13.2 6.5C11.2 9.7 5.8 9.7 3.8 6.5Z" fill="#2b2b2b"/><circle cx="8.5" cy="6.5" r="1.9" fill="#e6e6e6"/></svg>
<svg style="left:1411.5px;top:119.8px;" width="16" height="14" viewBox="0 0 16 14"><path d="M1.3 3.3H4.5L5.8 1.3H10.2L11.5 3.3H14.7V12.8H1.3Z" fill="#e6e6e6"/><circle cx="8" cy="7.8" r="3.5" fill="none" stroke="#2b2b2b" stroke-width="1"/><circle cx="8" cy="7.8" r="1.8" fill="none" stroke="#2b2b2b" stroke-width="1"/></svg>
<svg style="left:1391px;top:140px;" width="17" height="13" viewBox="0 0 17 13"><path d="M1.5 6.5C4 1 13 1 15.5 6.5C13 12 4 12 1.5 6.5Z" fill="#e6e6e6"/><path d="M3.8 6.5C5.8 3.3 11.2 3.3 13.2 6.5C11.2 9.7 5.8 9.7 3.8 6.5Z" fill="#334d80"/><circle cx="8.5" cy="6.5" r="1.9" fill="#e6e6e6"/></svg>
<svg style="left:1411.5px;top:139.8px;" width="16" height="14" viewBox="0 0 16 14"><path d="M1.3 3.3H4.5L5.8 1.3H10.2L11.5 3.3H14.7V12.8H1.3Z" fill="#e6e6e6"/><circle cx="8" cy="7.8" r="3.5" fill="none" stroke="#334d80" stroke-width="1"/><circle cx="8" cy="7.8" r="1.8" fill="none" stroke="#334d80" stroke-width="1"/></svg>
<svg style="left:1391px;top:160px;" width="17" height="13" viewBox="0 0 17 13"><path d="M1.5 6.5C4 1 13 1 15.5 6.5C13 12 4 12 1.5 6.5Z" fill="#e6e6e6"/><path d="M3.8 6.5C5.8 3.3 11.2 3.3 13.2 6.5C11.2 9.7 5.8 9.7 3.8 6.5Z" fill="#2b2b2b"/><circle cx="8.5" cy="6.5" r="1.9" fill="#e6e6e6"/></svg>
<svg style="left:1411.5px;top:159.8px;" width="16" height="14" viewBox="0 0 16 14"><path d="M1.3 3.3H4.5L5.8 1.3H10.2L11.5 3.3H14.7V12.8H1.3Z" fill="#e6e6e6"/><circle cx="8" cy="7.8" r="3.5" fill="none" stroke="#2b2b2b" stroke-width="1"/><circle cx="8" cy="7.8" r="1.8" fill="none" stroke="#2b2b2b" stroke-width="1"/></svg>
<div style="left:1220.3px;top:122px;width:1px;height:50px;background:#555;"></div>
<svg style="left:1237px;top:122px;" width="9" height="12" viewBox="0 0 9 12"><path d="M2 1.3L6.5 5.6L2 9.9" fill="none" stroke="#c8c8c8" stroke-width="1.15"/></svg>
<svg style="left:1237px;top:142px;" width="9" height="12" viewBox="0 0 9 12"><path d="M2 1.3L6.5 5.6L2 9.9" fill="none" stroke="#c8c8c8" stroke-width="1.15"/></svg>
<svg style="left:1237px;top:162px;" width="9" height="12" viewBox="0 0 9 12"><path d="M2 1.3L6.5 5.6L2 9.9" fill="none" stroke="#c8c8c8" stroke-width="1.15"/></svg>
<svg style="left:1252px;top:119px;" width="18" height="17" viewBox="0 0 18 17"><g fill="#e8964a"><circle cx="5" cy="4.5" r="3.5"/><circle cx="11.5" cy="4" r="3.8"/><rect x="3" y="9" width="10" height="6"/><path d="M13 12L17 9.5V14.5Z"/></g><circle cx="5" cy="4.5" r="1.4" fill="#282828"/><circle cx="11.5" cy="4" r="1.5" fill="#282828"/></svg>
<div class="t" style="top:122.14px;font-size:12px;color:#e0e0e0;left:1275.3px;">Camera</div>
<div style="left:1334.9px;top:117.8px;width:19.8px;height:17.5px;background:#3f5a52;border-radius:4px;box-shadow:inset 0 0 0 1px #5f6e68;"></div>
<svg style="left:1337px;top:119px;" width="16" height="15" viewBox="0 0 16 15"><g fill="none" stroke="#5fd0a8" stroke-width="1.1"><circle cx="5" cy="5" r="3.2"/><circle cx="11" cy="4.5" r="3.5"/><rect x="3.5" y="9" width="8" height="4.5"/><path d="M11.5 11L15 9V14L11.5 12"/></g></svg>
<div style="left:1253px;top:138.5px;width:18px;height:17px;background:#4f6590;border-radius:4px;box-shadow:inset 0 0 0 1px #6a7ea8;"></div>
<svg style="left:1254px;top:139px;" width="16" height="16" viewBox="0 0 16 16"><path d="M3 3.5H13L8 13Z" fill="none" stroke="#e8964a" stroke-width="2"/></svg>
<div class="t" style="top:142.14px;font-size:12px;color:#f0a658;left:1275.3px;">Cube</div>
<svg style="left:1324px;top:138px;" width="17" height="17" viewBox="0 0 17 17"><g fill="none" stroke="#2fc4c4" stroke-width="1.2"><path d="M3.5 3.5H13.5L8.5 13.5Z"/></g><g fill="#334d80" stroke="#2fc4c4" stroke-width="1.1"><rect x="1.5" y="1.5" width="3.5" height="3.5"/><rect x="12" y="1.5" width="3.5" height="3.5"/><rect x="6.8" y="12" width="3.5" height="3.5"/></g></svg>
<svg style="left:1253px;top:158px;" width="16" height="18" viewBox="0 0 16 18"><circle cx="8" cy="6.5" r="5.5" fill="#e8964a"/><rect x="5" y="11" width="6" height="3" fill="#e8964a"/><rect x="6" y="15" width="4" height="1.5" fill="#e8964a"/><path d="M5.5 5L7 8M10.5 5L9 8M6 8.5H10" stroke="#282828" stroke-width="1"/></svg>
<div class="t" style="top:162.14px;font-size:12px;color:#e0e0e0;left:1275.3px;">Light</div>
<svg style="left:1324px;top:158px;" width="16" height="18" viewBox="0 0 16 18"><circle cx="8" cy="8" r="6" fill="none" stroke="#2fc49a" stroke-width="1.1"/><circle cx="8" cy="7" r="1.5" fill="#2fc49a"/><path d="M8 9V16" stroke="#2fc49a" stroke-width="1" stroke-dasharray="1.5 1"/></svg>
<div style="left:1199.5px;top:309.8px;width:31.2px;height:18.4px;background:#2a2a2a;border-radius:4px;box-shadow:inset 0 0 0 1px #3c3c3c;"></div>
<svg style="left:1203px;top:311px;" width="17" height="16" viewBox="0 0 17 16"><g fill="#e6e6e6"><rect x="1" y="2" width="13" height="5" rx="2.5"/><rect x="1" y="9" width="13" height="5" rx="2.5"/></g><circle cx="11.5" cy="4.5" r="1.8" fill="#2a2a2a"/><circle cx="11.5" cy="11.5" r="1.8" fill="#2a2a2a"/></svg>
<svg style="left:1220px;top:316px;" width="9" height="6" viewBox="0 0 9 6"><path d="M1 1L4.5 5L8 1" fill="none" stroke="#d0d0d0" stroke-width="1.2"/></svg>
<div style="left:1259px;top:309.8px;width:117.6px;height:18.4px;background:#1d1d1d;border-radius:4px;box-shadow:inset 0 0 0 1px #3a3a3a;"></div>
<svg style="left:1262px;top:311px;" width="16" height="16" viewBox="0 0 16 16"><circle cx="9.5" cy="6.5" r="4.3" fill="none" stroke="#ddd" stroke-width="1.1"/><path d="M6.5 9.5L1.5 14.5" stroke="#ddd" stroke-width="1.2"/></svg>
<div class="t" style="top:312.74px;font-size:12px;color:#6f6f6f;left:1284.2px;">Search</div>
<div style="left:1412.2px;top:309.8px;width:19.3px;height:18.4px;background:#2a2a2a;border-radius:4px;box-shadow:inset 0 0 0 1px #3c3c3c;"></div>
<svg style="left:1417px;top:316px;" width="9" height="6" viewBox="0 0 9 6"><path d="M1 1L4.5 5L8 1" fill="none" stroke="#d0d0d0" stroke-width="1.2"/></svg>
<div style="left:1191px;top:331px;width:28px;height:37px;background:#1f1f1f;"></div>
<div style="left:1193px;top:561.3px;width:26px;height:25.4px;background:#2b2b2b;border-radius:4px 0 0 4px;"></div>
<svg style="left:1198px;top:345.3px;" width="16" height="16" viewBox="0 0 16 16"><g fill="#d0d0d0"><rect x="3" y="1" width="1.6" height="7"/><path d="M1.5 9A2.3 2.3 0 0 1 6 9V13A2.2 2.2 0 0 1 1.5 13Z"/><path d="M9.5 1.5V4.5L11.3 5.5L13 4.5V1.5A3.5 3.5 0 0 1 11.8 8V14.5A.8.8 0 0 1 10.8 14.5V8A3.5 3.5 0 0 1 9.5 1.5Z"/></g></svg>
<svg style="left:1198px;top:381px;" width="16" height="16" viewBox="0 0 16 16"><g fill="#d0d0d0"><path d="M1.5 4.5H4.5L5.5 2.5H9.5L10.5 4.5H14.5V14.5H1.5Z"/><rect x="11.8" y="1.3" width="2.4" height="1.2"/></g><g fill="#1d1d1d"><rect x="3" y="6.5" width="6.5" height="1"/><rect x="3" y="9" width="6.5" height="1"/><rect x="3" y="11.5" width="6.5" height="1"/><rect x="11" y="7" width="2" height="2"/><rect x="11" y="10.5" width="2" height="2"/></g></svg>
<svg style="left:1198px;top:410.3px;" width="16" height="16" viewBox="0 0 16 16"><g fill="#d0d0d0"><rect x="1" y="1.5" width="14" height="5" rx="1"/><rect x="3.5" y="6" width="9" height="9"/></g><rect x="1" y="4.5" width="14" height="1" fill="#1d1d1d"/><path d="M4.5 14L8 9.5L11.5 14Z" fill="#555"/><circle cx="10.5" cy="8.5" r=".9" fill="#555"/></svg>
<svg style="left:1198px;top:437.8px;" width="16" height="16" viewBox="0 0 16 16"><g fill="none" stroke="#d0d0d0" stroke-width="1.1"><path d="M2 5V14.5H11"/><path d="M4 3V12.5H13"/></g><rect x="6" y="1" width="8.5" height="9.5" fill="#1d1d1d" stroke="#d0d0d0" stroke-width="1.1"/><path d="M6.5 10L9.5 5L12.5 10Z" fill="#d0d0d0"/><circle cx="12.2" cy="3.5" r="1" fill="#d0d0d0"/></svg>
<svg style="left:1198px;top:465.3px;" width="16" height="16" viewBox="0 0 16 16"><g fill="#d0d0d0"><path d="M5 1.5L8.5 9A3.3 3.3 0 0 1 1.5 9Z"/><circle cx="12.5" cy="4" r="1.8"/></g><circle cx="10" cy="11" r="3.5" fill="#1d1d1d" stroke="#d0d0d0" stroke-width="1.1"/><circle cx="9.3" cy="10.3" r="1" fill="#d0d0d0"/></svg>
<svg style="left:1197px;top:492.7px;" width="18" height="18" viewBox="0 0 18 18"><circle cx="8" cy="8" r="6.2" fill="none" stroke="#c85a68" stroke-width="1.4"/><path d="M3.5 5.5C5 4.5 6.5 5 7 6.5S6 9 7.5 10.5S8 13 7.5 14M9.5 2.5C9 4 10.5 5.5 12 5.2M10 13.5C10.5 11.5 12 10.5 14 10.5" fill="none" stroke="#c85a68" stroke-width="1.8"/><path d="M1.2 14.8L14.8 1.2" stroke="#1d1d1d" stroke-width="2.4"/><path d="M1.2 14.8L14.8 1.2" stroke="#c85a68" stroke-width="1.1"/></svg>
<svg style="left:1198px;top:530.3px;" width="16" height="16" viewBox="0 0 16 16"><rect x="1.5" y="1.5" width="13" height="3.5" fill="none" stroke="#e6e6e6" stroke-width="1.2"/><rect x="2.5" y="5" width="11" height="9.5" fill="none" stroke="#e6e6e6" stroke-width="1.2"/><rect x="6" y="7.3" width="4" height="1.6" fill="#e6e6e6"/></svg>
<svg style="left:1198px;top:566.2px;" width="16" height="16" viewBox="0 0 16 16"><g fill="none" stroke="#e0964a" stroke-width="1.1"><path d="M1 4V1H4M12 1H15V4M15 12V15H12M4 15H1V12"/></g><rect x="3.5" y="3.5" width="9" height="9" fill="#e8964a"/></svg>
<svg style="left:1198px;top:594.5px;" width="16" height="16" viewBox="0 0 16 16"><path d="M12.5 1.5L10.5 3.5L10.8 5.2L12.5 5.5L14.5 3.5A4 4 0 0 1 9.5 8.5L3.5 14.5A1.6 1.6 0 0 1 1.5 12.5L7.5 6.5A4 4 0 0 1 12.5 1.5Z" fill="#5b8ae0"/></svg>
<svg style="left:1198px;top:622px;" width="16" height="16" viewBox="0 0 16 16"><g stroke="#5b8ae0" stroke-width="1.2"><path d="M3 3.5H13.5M3 3.5L12.5 13"/></g><g fill="#5b8ae0"><circle cx="3" cy="3.5" r="2.3"/><circle cx="3" cy="13" r="1.6"/><circle cx="13.5" cy="3.5" r="1.6"/><circle cx="12.5" cy="13" r="2.3"/></g></svg>
<svg style="left:1198px;top:649.5px;" width="16" height="16" viewBox="0 0 16 16"><path d="M13 10A6 6 0 1 1 11 3" fill="none" stroke="#5b8ae0" stroke-width="1.2"/><circle cx="7.5" cy="8.5" r="3" fill="#5b8ae0"/><circle cx="13" cy="3.5" r="1.8" fill="#5b8ae0"/></svg>
<svg style="left:1198px;top:677.8px;" width="16" height="16" viewBox="0 0 16 16"><path d="M2.5 9.5A5 5 0 0 0 9 14.5L14 6A3 3 0 0 0 9.5 2Z" fill="none" stroke="#5b8ae0" stroke-width="1.3"/><circle cx="7" cy="9.5" r="3" fill="none" stroke="#5b8ae0" stroke-width="1.3"/><circle cx="7" cy="9.5" r="1.4" fill="#5b8ae0"/><circle cx="11.5" cy="4.5" r="1" fill="#5b8ae0"/></svg>
<svg style="left:1198px;top:705.3px;" width="16" height="16" viewBox="0 0 16 16"><g fill="none" stroke="#2fc48a" stroke-width="1.2"><path d="M3.5 3.5H13L8 13Z"/></g><g fill="#1d1d1d" stroke="#2fc48a" stroke-width="1.1"><rect x="1.5" y="1.5" width="3.5" height="3.5"/><rect x="11" y="1.5" width="3.5" height="3.5"/><rect x="6.3" y="11.5" width="3.5" height="3.5"/></g></svg>
<svg style="left:1198px;top:733.7px;" width="16" height="16" viewBox="0 0 16 16"><circle cx="8" cy="8" r="6.5" fill="#c0505f"/><path d="M8 8H14.5A6.5 6.5 0 0 1 8 14.5Z" fill="#1d1d1d"/><path d="M8 1.5A6.5 6.5 0 0 0 1.5 8H8Z" fill="#e87a86"/></svg>
<svg style="left:1198px;top:770px;" width="16" height="16" viewBox="0 0 16 16"><g fill="#c0505f"><rect x="1.5" y="1.5" width="13" height="13"/></g><g fill="#1d1d1d"><rect x="1.5" y="1.5" width="3.25" height="3.25"/><rect x="8" y="1.5" width="3.25" height="3.25"/><rect x="4.75" y="4.75" width="3.25" height="3.25"/><rect x="11.25" y="4.75" width="3.25" height="3.25"/><rect x="1.5" y="8" width="3.25" height="3.25"/><rect x="8" y="8" width="3.25" height="3.25"/><rect x="4.75" y="11.25" width="3.25" height="3.25"/><rect x="11.25" y="11.25" width="3.25" height="3.25"/></g></svg>
<div style="left:1191px;top:368px;width:28px;height:1px;background:#262626;"></div>
<div style="left:1191px;top:402.5px;width:28px;height:1px;background:#262626;"></div>
<div style="left:1191px;top:485.5px;width:28px;height:1px;background:#262626;"></div>
<div style="left:1191px;top:555.5px;width:28px;height:1px;background:#262626;"></div>
<div style="left:1191px;top:758px;width:28px;height:1px;background:#262626;"></div>
<svg style="left:1229.5px;top:342.5px;" width="15" height="15" viewBox="0 0 15 15"><g fill="none" stroke="#d8d8d8" stroke-width="1.1"><path d="M1 4V1H4M11 1H14V4M14 11V14H11M4 14H1V11"/></g><rect x="3.5" y="3.5" width="8" height="8" fill="#e6e6e6"/></svg>
<div class="t" style="top:343.64px;font-size:12px;color:#e0e0e0;left:1253.3px;">Cube</div>
<svg style="left:1413px;top:342px;" width="16" height="16" viewBox="0 0 16 16"><g fill="none" stroke="#9a9a9a" stroke-width="1.1"><path d="M9 2.5L14 7.5L12.6 8.2L10.2 9L8.6 12.4L4.4 8.2L7.8 6.6L8.5 4.2Z"/><path d="M6.5 10.2L2 14.5"/></g></svg>
<div style="left:1228px;top:377px;width:204px;height:18.3px;background:#2a2a2a;border-radius:4px;box-shadow:inset 0 0 0 1px #3a3a3a;"></div>
<div style="left:1258.3px;top:377.6px;width:173.1px;height:17.1px;background:#1d1d1d;border-radius:0 4px 4px 0;"></div>
<svg style="left:1232px;top:379px;" width="15" height="15" viewBox="0 0 15 15"><g fill="none" stroke="#d8d8d8" stroke-width="1.1"><path d="M1 4V1H4M11 1H14V4M14 11V14H11M4 14H1V11"/></g><rect x="3.5" y="3.5" width="8" height="8" fill="#e6e6e6"/></svg>
<svg style="left:1248px;top:384px;" width="8" height="5.5" viewBox="0 0 8 5.5"><path d="M1 1L4 4.5L7 1" fill="none" stroke="#d0d0d0" stroke-width="1.2"/></svg>
<div class="t" style="top:380.14px;font-size:12px;color:#e0e0e0;left:1266px;">Cube</div>
<div style="left:1434px;top:345px;width:3px;height:440px;background:#3a3a3a;border-radius:2px;"></div>
<div style="left:1227.2px;top:406.3px;width:204.6px;height:280.4px;background:#3d3d3d;border-radius:5px;"></div>
<svg style="left:1234.2px;top:416.5px;" width="10.5" height="7" viewBox="0 0 10.5 7"><path d="M1 1L5.25 6L9.5 1" fill="none" stroke="#9a9a9a" stroke-width="1.2"/></svg>
<div class="t" style="top:412.94px;font-size:12px;color:#e6e6e6;left:1250px;">Transform</div>
<svg style="left:1414px;top:416px;" width="12" height="6" viewBox="0 0 12 6"><rect x="1" y="1" width="1.2" height="1.2" fill="#1a1a1a"/><rect x="1" y="3.7" width="1.2" height="1.2" fill="#1a1a1a"/><rect x="3.7" y="1" width="1.2" height="1.2" fill="#1a1a1a"/><rect x="3.7" y="3.7" width="1.2" height="1.2" fill="#1a1a1a"/><rect x="6.4" y="1" width="1.2" height="1.2" fill="#1a1a1a"/><rect x="6.4" y="3.7" width="1.2" height="1.2" fill="#1a1a1a"/><rect x="9.1" y="1" width="1.2" height="1.2" fill="#1a1a1a"/><rect x="9.1" y="3.7" width="1.2" height="1.2" fill="#1a1a1a"/></svg>
<div style="left:1308.2px;top:440px;width:74.8px;height:18.3px;background:#545454;border-radius:4px 4px 0 0;"></div>
<div class="t" style="top:443.04px;font-size:12px;color:#e0e0e0;right:142.6px;">Location X</div>
<div class="t" style="top:443.04px;font-size:12px;color:#e6e6e6;left:1345.6px;transform:translateX(-50%);">0 m</div>
<svg style="left:1386px;top:442px;" width="16" height="14" viewBox="0 0 16 14"><g fill="none" stroke="#c8c8c8" stroke-width="1"><path d="M2.5 6V3.5A3 3 0 0 1 8.5 3.5"/><rect x="4.5" y="6.5" width="9" height="6"/></g><rect x="8" y="9" width="2" height="1" fill="#c8c8c8"/></svg>
<svg style="left:1411px;top:446.5px;" width="6" height="6" viewBox="0 0 6 6"><circle cx="3" cy="3" r="2.1" fill="#d8d8d8"/></svg>
<div style="left:1308.2px;top:459.3px;width:74.8px;height:18.3px;background:#545454;"></div>
<div class="t" style="top:462.34px;font-size:12px;color:#e0e0e0;right:142.6px;">Y</div>
<div class="t" style="top:462.34px;font-size:12px;color:#e6e6e6;left:1345.6px;transform:translateX(-50%);">0 m</div>
<svg style="left:1386px;top:461.3px;" width="16" height="14" viewBox="0 0 16 14"><g fill="none" stroke="#c8c8c8" stroke-width="1"><path d="M2.5 6V3.5A3 3 0 0 1 8.5 3.5"/><rect x="4.5" y="6.5" width="9" height="6"/></g><rect x="8" y="9" width="2" height="1" fill="#c8c8c8"/></svg>
<svg style="left:1411px;top:465.8px;" width="6" height="6" viewBox="0 0 6 6"><circle cx="3" cy="3" r="2.1" fill="#d8d8d8"/></svg>
<div style="left:1308.2px;top:478.6px;width:74.8px;height:18.3px;background:#545454;border-radius:0 0 4px 4px;"></div>
<div class="t" style="top:481.64px;font-size:12px;color:#e0e0e0;right:142.6px;">Z</div>
<div class="t" style="top:481.64px;font-size:12px;color:#e6e6e6;left:1345.6px;transform:translateX(-50%);">0 m</div>
<svg style="left:1386px;top:480.6px;" width="16" height="14" viewBox="0 0 16 14"><g fill="none" stroke="#c8c8c8" stroke-width="1"><path d="M2.5 6V3.5A3 3 0 0 1 8.5 3.5"/><rect x="4.5" y="6.5" width="9" height="6"/></g><rect x="8" y="9" width="2" height="1" fill="#c8c8c8"/></svg>
<svg style="left:1411px;top:485.1px;" width="6" height="6" viewBox="0 0 6 6"><circle cx="3" cy="3" r="2.1" fill="#d8d8d8"/></svg>
<div style="left:1308.2px;top:505.1px;width:74.8px;height:18.3px;background:#545454;border-radius:4px 4px 0 0;"></div>
<div class="t" style="top:508.14px;font-size:12px;color:#e0e0e0;right:142.6px;">Rotation X</div>
<div class="t" style="top:508.14px;font-size:12px;color:#e6e6e6;left:1345.6px;transform:translateX(-50%);">0°</div>
<svg style="left:1386px;top:507.1px;" width="16" height="14" viewBox="0 0 16 14"><g fill="none" stroke="#c8c8c8" stroke-width="1"><path d="M2.5 6V3.5A3 3 0 0 1 8.5 3.5"/><rect x="4.5" y="6.5" width="9" height="6"/></g><rect x="8" y="9" width="2" height="1" fill="#c8c8c8"/></svg>
<svg style="left:1411px;top:511.6px;" width="6" height="6" viewBox="0 0 6 6"><circle cx="3" cy="3" r="2.1" fill="#d8d8d8"/></svg>
<div style="left:1308.2px;top:524.4px;width:74.8px;height:18.3px;background:#545454;"></div>
<div class="t" style="top:527.44px;font-size:12px;color:#e0e0e0;right:142.6px;">Y</div>
<div class="t" style="top:527.44px;font-size:12px;color:#e6e6e6;left:1345.6px;transform:translateX(-50%);">0°</div>
<svg style="left:1386px;top:526.4px;" width="16" height="14" viewBox="0 0 16 14"><g fill="none" stroke="#c8c8c8" stroke-width="1"><path d="M2.5 6V3.5A3 3 0 0 1 8.5 3.5"/><rect x="4.5" y="6.5" width="9" height="6"/></g><rect x="8" y="9" width="2" height="1" fill="#c8c8c8"/></svg>
<svg style="left:1411px;top:530.9px;" width="6" height="6" viewBox="0 0 6 6"><circle cx="3" cy="3" r="2.1" fill="#d8d8d8"/></svg>
<div style="left:1308.2px;top:543.7px;width:74.8px;height:18.3px;background:#545454;border-radius:0 0 4px 4px;"></div>
<div class="t" style="top:546.74px;font-size:12px;color:#e0e0e0;right:142.6px;">Z</div>
<div class="t" style="top:546.74px;font-size:12px;color:#e6e6e6;left:1345.6px;transform:translateX(-50%);">0°</div>
<svg style="left:1386px;top:545.7px;" width="16" height="14" viewBox="0 0 16 14"><g fill="none" stroke="#c8c8c8" stroke-width="1"><path d="M2.5 6V3.5A3 3 0 0 1 8.5 3.5"/><rect x="4.5" y="6.5" width="9" height="6"/></g><rect x="8" y="9" width="2" height="1" fill="#c8c8c8"/></svg>
<svg style="left:1411px;top:550.2px;" width="6" height="6" viewBox="0 0 6 6"><circle cx="3" cy="3" r="2.1" fill="#d8d8d8"/></svg>
<div style="left:1308.2px;top:570.8px;width:74.8px;height:17px;background:#282828;border-radius:4px;"></div>
<div class="t" style="top:573.34px;font-size:12px;color:#e0e0e0;right:142.6px;">Mode</div>
<div class="t" style="top:573.34px;font-size:12px;color:#e6e6e6;left:1315.5px;letter-spacing:-0.25px;">XYZ Euler</div>
<svg style="left:1372px;top:576.5px;" width="8" height="5.5" viewBox="0 0 8 5.5"><path d="M1 1L4 4.5L7 1" fill="none" stroke="#d0d0d0" stroke-width="1.2"/></svg>
<svg style="left:1411px;top:576px;" width="6" height="6" viewBox="0 0 6 6"><circle cx="3" cy="3" r="2.1" fill="#d8d8d8"/></svg>
<div style="left:1308.2px;top:595.3px;width:74.8px;height:18.3px;background:#545454;border-radius:4px 4px 0 0;"></div>
<div class="t" style="top:598.34px;font-size:12px;color:#e0e0e0;right:142.6px;">Scale X</div>
<div class="t" style="top:598.34px;font-size:12px;color:#e6e6e6;left:1345.6px;transform:translateX(-50%);">1.000</div>
<svg style="left:1386px;top:597.3px;" width="16" height="14" viewBox="0 0 16 14"><g fill="none" stroke="#c8c8c8" stroke-width="1"><path d="M2.5 6V3.5A3 3 0 0 1 8.5 3.5"/><rect x="4.5" y="6.5" width="9" height="6"/></g><rect x="8" y="9" width="2" height="1" fill="#c8c8c8"/></svg>
<svg style="left:1411px;top:601.8px;" width="6" height="6" viewBox="0 0 6 6"><circle cx="3" cy="3" r="2.1" fill="#d8d8d8"/></svg>
<div style="left:1308.2px;top:614.6px;width:74.8px;height:18.3px;background:#545454;"></div>
<div class="t" style="top:617.64px;font-size:12px;color:#e0e0e0;right:142.6px;">Y</div>
<div class="t" style="top:617.64px;font-size:12px;color:#e6e6e6;left:1345.6px;transform:translateX(-50%);">1.000</div>
<svg style="left:1386px;top:616.6px;" width="16" height="14" viewBox="0 0 16 14"><g fill="none" stroke="#c8c8c8" stroke-width="1"><path d="M2.5 6V3.5A3 3 0 0 1 8.5 3.5"/><rect x="4.5" y="6.5" width="9" height="6"/></g><rect x="8" y="9" width="2" height="1" fill="#c8c8c8"/></svg>
<svg style="left:1411px;top:621.1px;" width="6" height="6" viewBox="0 0 6 6"><circle cx="3" cy="3" r="2.1" fill="#d8d8d8"/></svg>
<div style="left:1308.2px;top:633.9px;width:74.8px;height:18.3px;background:#545454;border-radius:0 0 4px 4px;"></div>
<div class="t" style="top:636.94px;font-size:12px;color:#e0e0e0;right:142.6px;">Z</div>
<div class="t" style="top:636.94px;font-size:12px;color:#e6e6e6;left:1345.6px;transform:translateX(-50%);">1.000</div>
<svg style="left:1386px;top:635.9px;" width="16" height="14" viewBox="0 0 16 14"><g fill="none" stroke="#c8c8c8" stroke-width="1"><path d="M2.5 6V3.5A3 3 0 0 1 8.5 3.5"/><rect x="4.5" y="6.5" width="9" height="6"/></g><rect x="8" y="9" width="2" height="1" fill="#c8c8c8"/></svg>
<svg style="left:1411px;top:640.4px;" width="6" height="6" viewBox="0 0 6 6"><circle cx="3" cy="3" r="2.1" fill="#d8d8d8"/></svg>
<svg style="left:1250px;top:668.5px;" width="9" height="13" viewBox="0 0 9 13"><path d="M2.2 1.5L7 6.3L2.2 11.1" fill="none" stroke="#b8b8b8" stroke-width="1.2"/></svg>
<div class="t" style="top:668.84px;font-size:12px;color:#e0e0e0;left:1263.3px;">Delta Transform</div>
<div style="left:1227.2px;top:689.3px;width:204.6px;height:24.4px;background:#3d3d3d;border-radius:5px;"></div>
<svg style="left:1235.5px;top:695px;" width="9" height="13" viewBox="0 0 9 13"><path d="M2.2 1.5L7 6.3L2.2 11.1" fill="none" stroke="#b8b8b8" stroke-width="1.2"/></svg>
<div class="t" style="top:695.54px;font-size:12px;color:#e0e0e0;left:1249.3px;">Relations</div>
<svg style="left:1414px;top:698.5px;" width="12" height="6" viewBox="0 0 12 6"><rect x="1" y="1" width="1.2" height="1.2" fill="#1a1a1a"/><rect x="1" y="3.7" width="1.2" height="1.2" fill="#1a1a1a"/><rect x="3.7" y="1" width="1.2" height="1.2" fill="#1a1a1a"/><rect x="3.7" y="3.7" width="1.2" height="1.2" fill="#1a1a1a"/><rect x="6.4" y="1" width="1.2" height="1.2" fill="#1a1a1a"/><rect x="6.4" y="3.7" width="1.2" height="1.2" fill="#1a1a1a"/><rect x="9.1" y="1" width="1.2" height="1.2" fill="#1a1a1a"/><rect x="9.1" y="3.7" width="1.2" height="1.2" fill="#1a1a1a"/></svg>
<div style="left:1227.2px;top:716.2px;width:204.6px;height:24.9px;background:#3d3d3d;border-radius:5px;"></div>
<svg style="left:1235.5px;top:722.15px;" width="9" height="13" viewBox="0 0 9 13"><path d="M2.2 1.5L7 6.3L2.2 11.1" fill="none" stroke="#b8b8b8" stroke-width="1.2"/></svg>
<div class="t" style="top:722.69px;font-size:12px;color:#e0e0e0;left:1249.3px;">Collections</div>
<svg style="left:1414px;top:725.65px;" width="12" height="6" viewBox="0 0 12 6"><rect x="1" y="1" width="1.2" height="1.2" fill="#1a1a1a"/><rect x="1" y="3.7" width="1.2" height="1.2" fill="#1a1a1a"/><rect x="3.7" y="1" width="1.2" height="1.2" fill="#1a1a1a"/><rect x="3.7" y="3.7" width="1.2" height="1.2" fill="#1a1a1a"/><rect x="6.4" y="1" width="1.2" height="1.2" fill="#1a1a1a"/><rect x="6.4" y="3.7" width="1.2" height="1.2" fill="#1a1a1a"/><rect x="9.1" y="1" width="1.2" height="1.2" fill="#1a1a1a"/><rect x="9.1" y="3.7" width="1.2" height="1.2" fill="#1a1a1a"/></svg>
<div style="left:1227.2px;top:743.1px;width:204.6px;height:24.9px;background:#3d3d3d;border-radius:5px;"></div>
<svg style="left:1235.5px;top:749.05px;" width="9" height="13" viewBox="0 0 9 13"><path d="M2.2 1.5L7 6.3L2.2 11.1" fill="none" stroke="#b8b8b8" stroke-width="1.2"/></svg>
<div class="t" style="top:749.59px;font-size:12px;color:#e0e0e0;left:1249.3px;">Instancing</div>
<svg style="left:1414px;top:752.55px;" width="12" height="6" viewBox="0 0 12 6"><rect x="1" y="1" width="1.2" height="1.2" fill="#1a1a1a"/><rect x="1" y="3.7" width="1.2" height="1.2" fill="#1a1a1a"/><rect x="3.7" y="1" width="1.2" height="1.2" fill="#1a1a1a"/><rect x="3.7" y="3.7" width="1.2" height="1.2" fill="#1a1a1a"/><rect x="6.4" y="1" width="1.2" height="1.2" fill="#1a1a1a"/><rect x="6.4" y="3.7" width="1.2" height="1.2" fill="#1a1a1a"/><rect x="9.1" y="1" width="1.2" height="1.2" fill="#1a1a1a"/><rect x="9.1" y="3.7" width="1.2" height="1.2" fill="#1a1a1a"/></svg>
<div style="left:1227.2px;top:770px;width:204.6px;height:25px;background:#3d3d3d;border-radius:5px;"></div>
<svg style="left:1235.5px;top:776px;" width="9" height="13" viewBox="0 0 9 13"><path d="M2.2 1.5L7 6.3L2.2 11.1" fill="none" stroke="#b8b8b8" stroke-width="1.2"/></svg>
<div class="t" style="top:776.54px;font-size:12px;color:#e0e0e0;left:1249.3px;">Motion Paths</div>
<svg style="left:1414px;top:779.5px;" width="12" height="6" viewBox="0 0 12 6"><rect x="1" y="1" width="1.2" height="1.2" fill="#1a1a1a"/><rect x="1" y="3.7" width="1.2" height="1.2" fill="#1a1a1a"/><rect x="3.7" y="1" width="1.2" height="1.2" fill="#1a1a1a"/><rect x="3.7" y="3.7" width="1.2" height="1.2" fill="#1a1a1a"/><rect x="6.4" y="1" width="1.2" height="1.2" fill="#1a1a1a"/><rect x="6.4" y="3.7" width="1.2" height="1.2" fill="#1a1a1a"/><rect x="9.1" y="1" width="1.2" height="1.2" fill="#1a1a1a"/><rect x="9.1" y="3.7" width="1.2" height="1.2" fill="#1a1a1a"/></svg>
<div style="left:1227.2px;top:796.9px;width:204.6px;height:24.9px;background:#3d3d3d;border-radius:5px;"></div>
<svg style="left:1235.5px;top:802.85px;" width="9" height="13" viewBox="0 0 9 13"><path d="M2.2 1.5L7 6.3L2.2 11.1" fill="none" stroke="#b8b8b8" stroke-width="1.2"/></svg>
<div class="t" style="top:803.39px;font-size:12px;color:#e0e0e0;left:1249.3px;">Visibility</div>
<svg style="left:1414px;top:806.35px;" width="12" height="6" viewBox="0 0 12 6"><rect x="1" y="1" width="1.2" height="1.2" fill="#1a1a1a"/><rect x="1" y="3.7" width="1.2" height="1.2" fill="#1a1a1a"/><rect x="3.7" y="1" width="1.2" height="1.2" fill="#1a1a1a"/><rect x="3.7" y="3.7" width="1.2" height="1.2" fill="#1a1a1a"/><rect x="6.4" y="1" width="1.2" height="1.2" fill="#1a1a1a"/><rect x="6.4" y="3.7" width="1.2" height="1.2" fill="#1a1a1a"/><rect x="9.1" y="1" width="1.2" height="1.2" fill="#1a1a1a"/><rect x="9.1" y="3.7" width="1.2" height="1.2" fill="#1a1a1a"/></svg>
<div style="left:1227.2px;top:824.3px;width:204.6px;height:18.7px;background:#3d3d3d;border-radius:5px 5px 0 0;"></div>
<svg style="left:1235.5px;top:830px;" width="9" height="13" viewBox="0 0 9 13"><path d="M2.2 1.5L7 6.3L2.2 11.1" fill="none" stroke="#b8b8b8" stroke-width="1.2"/></svg>
<div class="t" style="top:830.54px;font-size:12px;color:#e0e0e0;left:1249.3px;">Viewport Display</div>
<svg style="left:1414px;top:833.5px;" width="12" height="6" viewBox="0 0 12 6"><rect x="1" y="1" width="1.2" height="1.2" fill="#1a1a1a"/><rect x="1" y="3.7" width="1.2" height="1.2" fill="#1a1a1a"/><rect x="3.7" y="1" width="1.2" height="1.2" fill="#1a1a1a"/><rect x="3.7" y="3.7" width="1.2" height="1.2" fill="#1a1a1a"/><rect x="6.4" y="1" width="1.2" height="1.2" fill="#1a1a1a"/><rect x="6.4" y="3.7" width="1.2" height="1.2" fill="#1a1a1a"/><rect x="9.1" y="1" width="1.2" height="1.2" fill="#1a1a1a"/><rect x="9.1" y="3.7" width="1.2" height="1.2" fill="#1a1a1a"/></svg>
<div style="left:8.3px;top:788.7px;width:31.3px;height:18.3px;background:#2a2a2a;border-radius:4px;box-shadow:inset 0 0 0 1px #3a3a3a;"></div>
<svg style="left:12px;top:790px;" width="16" height="16" viewBox="0 0 16 16"><circle cx="8" cy="8" r="6.5" fill="#e6e6e6"/><path d="M9.5 4.5L6.3 8L9.5 11.5" fill="none" stroke="#2a2a2a" stroke-width="2"/></svg>
<svg style="left:29px;top:795px;" width="9" height="6" viewBox="0 0 9 6"><path d="M1 1L4.5 5L8 1" fill="none" stroke="#d0d0d0" stroke-width="1.2"/></svg>
<div style="left:45.8px;top:788.7px;width:131.7px;height:18.3px;background:#2a2a2a;border-radius:4px;box-shadow:inset 0 0 0 1px #3a3a3a;"></div>
<div style="left:116.7px;top:789.5px;width:0.8px;height:17px;background:#3a3a3a;"></div>
<div class="t" style="top:791.74px;font-size:12px;color:#e0e0e0;left:53.1px;">Playback</div>
<svg style="left:106px;top:795px;" width="9" height="6" viewBox="0 0 9 6"><path d="M1 1L4.5 5L8 1" fill="none" stroke="#d0d0d0" stroke-width="1.2"/></svg>
<div class="t" style="top:791.74px;font-size:12px;color:#e0e0e0;left:124.4px;">Keying</div>
<svg style="left:167px;top:795px;" width="9" height="6" viewBox="0 0 9 6"><path d="M1 1L4.5 5L8 1" fill="none" stroke="#d0d0d0" stroke-width="1.2"/></svg>
<div class="t" style="top:791.74px;font-size:12px;color:#e0e0e0;left:186.9px;">View</div>
<div class="t" style="top:791.74px;font-size:12px;color:#e0e0e0;left:228.5px;">Marker</div>
<div style="left:502px;top:788.7px;width:37.3px;height:18.3px;background:#282828;border-radius:4px;"></div>
<div style="left:502px;top:788.7px;width:18.3px;height:18.3px;background:#4a4a4a;border-radius:4px 0 0 4px;"></div>
<svg style="left:504px;top:790px;" width="15" height="15" viewBox="0 0 15 15"><circle cx="7.5" cy="7.5" r="5" fill="none" stroke="#c8c8c8" stroke-width="1.1"/></svg>
<svg style="left:526px;top:795px;" width="8" height="5.5" viewBox="0 0 8 5.5"><path d="M1 1L4 4.5L7 1" fill="none" stroke="#666" stroke-width="1.2"/></svg>
<div style="left:547.2px;top:788.7px;width:117.8px;height:18.3px;background:#4a4a4a;border-radius:4px;"></div>
<div style="left:566.4px;top:788.7px;width:0.7px;height:18.3px;background:#3c3c3c;"></div>
<div style="left:586.1px;top:788.7px;width:0.7px;height:18.3px;background:#3c3c3c;"></div>
<div style="left:605.8px;top:788.7px;width:0.7px;height:18.3px;background:#3c3c3c;"></div>
<div style="left:625.9px;top:788.7px;width:0.7px;height:18.3px;background:#3c3c3c;"></div>
<div style="left:645.5px;top:788.7px;width:0.7px;height:18.3px;background:#3c3c3c;"></div>
<svg style="left:547.2px;top:788.7px;" width="118" height="18.3" viewBox="0 0 118 18.3"><g fill="#e6e6e6" transform="translate(-547.2 -788.7)"><rect x="551" y="792.5" width="2.2" height="10"/><path d="M560.5 792.5V802.5L554 797.5Z"/><path d="M567.5 797.7L572 792.6L576.5 797.7L572 802.8Z"/><path d="M583.5 794.5V800.8L578 797.7Z"/><path d="M600.8 791.8V803.6L590.6 797.7Z"/><path d="M611 791.8V803.6L621.3 797.7Z"/><path d="M629.3 794.5V800.8L634.5 797.7Z"/><path d="M635.5 797.7L640 792.6L644.5 797.7L640 802.8Z"/><path d="M651.8 792.5V802.5L658 797.5Z"/><rect x="658.4" y="792.5" width="2.2" height="10"/></g></svg>
<div style="left:906.9px;top:788.6px;width:73.5px;height:18.3px;background:#4a4a4a;border-radius:4px;"></div>
<div class="t" style="top:791.54px;font-size:12px;color:#e6e6e6;left:942.5px;transform:translateX(-50%);">1</div>
<div style="left:986.7px;top:788.6px;width:193.3px;height:18.3px;background:#4a4a4a;border-radius:4px;"></div>
<div style="left:986.7px;top:788.6px;width:19.1px;height:18.3px;background:#3a3a3a;border-radius:4px 0 0 4px;"></div>
<div style="left:1094.6px;top:788.6px;width:0.7px;height:18.3px;background:#3a3a3a;"></div>
<svg style="left:988px;top:789px;" width="17" height="17" viewBox="0 0 17 17"><circle cx="8.5" cy="9.5" r="5.3" fill="none" stroke="#e0e0e0" stroke-width="1.1"/><path d="M8.5 6.5V9.5H11M6.5 2.5H10.5M8.5 2.5V4M13 4.5L14.5 3" fill="none" stroke="#e0e0e0" stroke-width="1.1"/></svg>
<div class="t" style="top:791.54px;font-size:12px;color:#e6e6e6;left:1021px;">Start</div>
<div class="t" style="top:791.54px;font-size:12px;color:#e6e6e6;right:359.4px;">1</div>
<div class="t" style="top:791.54px;font-size:12px;color:#e6e6e6;left:1110.2px;">End</div>
<div class="t" style="top:791.54px;font-size:12px;color:#e6e6e6;right:273.1px;">250</div>
<div style="left:1px;top:810px;width:1187px;height:33px;background:#1d1d1d;border-radius:0 0 5px 5px;"></div>
<div style="left:9px;top:833px;width:1171px;height:9px;background:#545454;border-radius:4.5px;box-shadow:inset 0 0 0 1px #3a3a3a;"></div>
<div style="left:43px;top:829px;width:2px;height:4px;background:#4772b3;"></div>
<div style="left:43px;top:841.5px;width:2px;height:2px;background:#4772b3;"></div>
<svg style="left:9px;top:833px;" width="10" height="9" viewBox="0 0 10 9"><circle cx="4.5" cy="4.5" r="3" fill="#2a2a2a"/></svg>
<svg style="left:1170px;top:833px;" width="10" height="9" viewBox="0 0 10 9"><circle cx="5" cy="4.5" r="3" fill="#2a2a2a"/></svg>
<svg style="left:0px;top:841px;" width="1188" height="3" viewBox="0 0 1188 3"><rect x="83.3" y="0" width="1" height="5" fill="#2e2e2e"/><rect x="127.5" y="0" width="1" height="5" fill="#2e2e2e"/><rect x="171.7" y="0" width="1" height="5" fill="#2e2e2e"/><rect x="215.9" y="0" width="1" height="5" fill="#2e2e2e"/><rect x="260.2" y="0" width="1" height="5" fill="#2e2e2e"/><rect x="304.4" y="0" width="1" height="5" fill="#2e2e2e"/><rect x="348.6" y="0" width="1" height="5" fill="#2e2e2e"/><rect x="392.8" y="0" width="1" height="5" fill="#2e2e2e"/><rect x="437.0" y="0" width="1" height="5" fill="#2e2e2e"/><rect x="481.2" y="0" width="1" height="5" fill="#2e2e2e"/><rect x="525.5" y="0" width="1" height="5" fill="#2e2e2e"/><rect x="569.7" y="0" width="1" height="5" fill="#2e2e2e"/><rect x="613.9" y="0" width="1" height="5" fill="#2e2e2e"/><rect x="658.1" y="0" width="1" height="5" fill="#2e2e2e"/><rect x="702.3" y="0" width="1" height="5" fill="#2e2e2e"/><rect x="746.5" y="0" width="1" height="5" fill="#2e2e2e"/><rect x="790.8" y="0" width="1" height="5" fill="#2e2e2e"/><rect x="835.0" y="0" width="1" height="5" fill="#2e2e2e"/><rect x="879.2" y="0" width="1" height="5" fill="#2e2e2e"/><rect x="923.4" y="0" width="1" height="5" fill="#2e2e2e"/><rect x="967.6" y="0" width="1" height="5" fill="#2e2e2e"/><rect x="1011.8" y="0" width="1" height="5" fill="#2e2e2e"/><rect x="1056.0" y="0" width="1" height="5" fill="#2e2e2e"/><rect x="1100.3" y="0" width="1" height="5" fill="#2e2e2e"/><rect x="1144.5" y="0" width="1" height="5" fill="#2e2e2e"/></svg>
<div class="t" style="top:815.64px;font-size:12px;color:#d0d0d0;left:128.01px;transform:translateX(-50%);">20</div>
<div class="t" style="top:815.64px;font-size:12px;color:#d0d0d0;left:216.442px;transform:translateX(-50%);">40</div>
<div class="t" style="top:815.64px;font-size:12px;color:#d0d0d0;left:304.874px;transform:translateX(-50%);">60</div>
<div class="t" style="top:815.64px;font-size:12px;color:#d0d0d0;left:393.306px;transform:translateX(-50%);">80</div>
<div class="t" style="top:815.64px;font-size:12px;color:#d0d0d0;left:481.738px;transform:translateX(-50%);">100</div>
<div class="t" style="top:815.64px;font-size:12px;color:#d0d0d0;left:570.17px;transform:translateX(-50%);">120</div>
<div class="t" style="top:815.64px;font-size:12px;color:#d0d0d0;left:658.602px;transform:translateX(-50%);">140</div>
<div class="t" style="top:815.64px;font-size:12px;color:#d0d0d0;left:747.034px;transform:translateX(-50%);">160</div>
<div class="t" style="top:815.64px;font-size:12px;color:#d0d0d0;left:835.466px;transform:translateX(-50%);">180</div>
<div class="t" style="top:815.64px;font-size:12px;color:#d0d0d0;left:923.898px;transform:translateX(-50%);">200</div>
<div class="t" style="top:815.64px;font-size:12px;color:#d0d0d0;left:1012.33px;transform:translateX(-50%);">220</div>
<div class="t" style="top:815.64px;font-size:12px;color:#d0d0d0;left:1100.76px;transform:translateX(-50%);">240</div>
<div style="left:32.7px;top:812.9px;width:23.55px;height:16.7px;background:#4772b3;border-radius:4px;"></div>
<div class="t" style="top:815.64px;font-size:12px;color:#ffffff;left:44.5px;transform:translateX(-50%);">1</div>
<svg style="left:1px;top:825px;" width="8" height="12" viewBox="0 0 8 12"><path d="M2 2L6 6L2 10" fill="none" stroke="#8a8a8a" stroke-width="1.1"/></svg>
<svg style="left:1180px;top:825px;" width="8" height="12" viewBox="0 0 8 12"><path d="M6 2L2 6L6 10" fill="none" stroke="#8a8a8a" stroke-width="1.1"/></svg>
<svg style="left:11px;top:846px;" width="15" height="18" viewBox="0 0 15 18"><path d="M7.2 1.2H9.5A3.3 3.3 0 0 1 12.8 4.5V13.5A3.3 3.3 0 0 1 9.5 16.8H4.3A3.3 3.3 0 0 1 1 13.5V9.3" fill="none" stroke="#b8b8b8" stroke-width="1.2"/><path d="M1 9V4.3A3.3 3.3 0 0 1 4.3 1H6V9Z" fill="#b8b8b8"/></svg>
<svg style="left:222px;top:846px;" width="15" height="18" viewBox="0 0 15 18"><rect x="1.2" y="1.2" width="11.5" height="15.5" rx="3.3" fill="none" stroke="#b8b8b8" stroke-width="1.2"/><rect x="5" y="2.8" width="4.2" height="6.7" fill="#b8b8b8"/></svg>
<svg style="left:433px;top:846px;" width="15" height="18" viewBox="0 0 15 18"><path d="M6.8 1.2H4.5A3.3 3.3 0 0 0 1.2 4.5V13.5A3.3 3.3 0 0 0 4.5 16.8H9.7A3.3 3.3 0 0 0 13 13.5V9.3" fill="none" stroke="#b8b8b8" stroke-width="1.2"/><path d="M13 9V4.3A3.3 3.3 0 0 0 9.7 1H8V9Z" fill="#b8b8b8"/></svg>
<svg style="left:1372px;top:845px;" width="19" height="14" viewBox="0 0 19 14"><circle cx="8.5" cy="7" r="5.5" fill="none" stroke="#888" stroke-width="1"/><path d="M3 7H14M8.5 1.5C5.5 4.5 5.5 9.5 8.5 12.5M8.5 1.5C11.5 4.5 11.5 9.5 8.5 12.5M2 1.5L15 12.5" fill="none" stroke="#888" stroke-width="1"/></svg>
<div style="left:1396.3px;top:847px;width:1px;height:12px;background:#888;"></div>
<div class="t" style="top:848.84px;font-size:12px;color:#9a9a9a;left:1401.1px;">4.2.0</div>
<svg style="left:18px;top:869px;" width="38" height="27" viewBox="0 0 38 27"><defs><linearGradient id="tb1" x1="0" y1="1" x2="1" y2="0"><stop offset="0" stop-color="#5fbf5a"/><stop offset=".45" stop-color="#7b6fb8"/><stop offset="1" stop-color="#8a64f0"/></linearGradient></defs><path d="M2.5 3.5A1.5 1.5 0 0 1 4 2H20L16 20.5L13 23.5H4A1.5 1.5 0 0 1 2.5 22Z" fill="#f4f4f4"/><path d="M2.5 22V5" stroke="#7fd07a" stroke-width="1"/><path d="M15.3 15L26 3H33.5A1.5 1.5 0 0 1 35 4.5V22.5A1.5 1.5 0 0 1 33.5 24H17A1.5 1.5 0 0 1 15.5 22.5Z" fill="url(#tb1)"/><g fill="none" stroke="#e8e8f8" stroke-width="1.3"><circle cx="25.5" cy="18.5" r="2.3"/><path d="M33 17A2.3 2.3 0 1 0 33 20"/></g></svg>
<svg style="left:83px;top:867px;" width="31" height="31" viewBox="0 0 31 31"><circle cx="15.5" cy="15.5" r="14.4" fill="#7aa6e8"/><path d="M15.5 1.1A14.4 14.4 0 0 1 28 8.3H15.5A7.2 7.2 0 0 0 9.3 11.9L3.2 7.6A14.4 14.4 0 0 1 15.5 1.1Z" fill="#2f6bc8"/><path d="M3.2 7.6L9.3 11.9A7.2 7.2 0 0 0 15.5 22.7L12 29.5A14.4 14.4 0 0 1 3.2 7.6Z" fill="#5a8fe0"/><path d="M28 8.3A14.4 14.4 0 0 1 12 29.5L21.7 19.1A7.2 7.2 0 0 0 21.7 11.9Z" fill="#a8c4f0"/><circle cx="15.5" cy="15.5" r="7" fill="#fff"/><circle cx="15.5" cy="15.5" r="5.6" fill="#3a8cf0"/></svg>
<svg style="left:135px;top:868px;" width="29" height="30" viewBox="0 0 29 30"><path d="M14.5 1L28 11V27.5A1.5 1.5 0 0 1 26.5 29H2.5A1.5 1.5 0 0 1 1 27.5V11Z" fill="#6f7fcf"/><rect x="4" y="4" width="21" height="14" fill="#eeeeee"/><path d="M1 11L14.5 21L28 11V27.5A1.5 1.5 0 0 1 26.5 29H2.5A1.5 1.5 0 0 1 1 27.5Z" fill="#8b95d8"/><path d="M1 29L14.5 19L28 29" fill="#9aa3e0"/><text x="14.5" y="14" font-family="Liberation Sans" font-size="11" fill="#555" text-anchor="middle">@</text></svg>
<svg style="left:185px;top:870px;" width="31" height="25" viewBox="0 0 31 25"><defs><linearGradient id="tb2" x1="0" y1="0" x2="0" y2="1"><stop offset="0" stop-color="#20a8ff"/><stop offset="1" stop-color="#0a70f0"/></linearGradient></defs><path d="M1 3.5A2.5 2.5 0 0 1 3.5 1H11L13 3H27.5A2.5 2.5 0 0 1 30 5.5V21.5A2.5 2.5 0 0 1 27.5 24H3.5A2.5 2.5 0 0 1 1 21.5Z" fill="url(#tb2)"/></svg>
<div style="left:178.9px;top:897px;width:43.1px;height:3px;background:#e8e8e8;"></div>
<svg style="left:237px;top:868px;" width="30" height="29" viewBox="0 0 30 29"><path d="M9.5 7V3A1.5 1.5 0 0 1 11 1.5H18A1.5 1.5 0 0 1 19.5 3V7" fill="none" stroke="#e6e6e6" stroke-width="2"/><rect x="1" y="6" width="27.5" height="20.5" rx="1" fill="#e4e4e4"/><circle cx="22.8" cy="21.2" r="7" fill="#45a6e0"/><path d="M22.8 16.5V22.5M19.8 20L22.8 23.5L25.8 20M19.5 25.2H26" stroke="#fff" stroke-width="1.8" fill="none"/></svg>
<div style="left:281.1px;top:864.8px;width:42.8px;height:32.2px;background:#4b4553;"></div>
<svg style="left:291.5px;top:867px;" width="22" height="29" viewBox="0 0 22 29"><defs><linearGradient id="tb3" x1="0" y1="0" x2="0" y2="1"><stop offset="0" stop-color="#9aa0a6"/><stop offset="1" stop-color="#5e656b"/></linearGradient></defs><rect x="0.5" y="0.5" width="21" height="28.5" rx="3" fill="url(#tb3)"/><rect x="5.7" y="8.9" width="10.6" height="7.8" rx="1" fill="#2e3236"/><path d="M9.8 10.8L12 12.8L9.8 14.8" fill="none" stroke="#ddd" stroke-width="1"/></svg>
<div style="left:281.1px;top:897px;width:42.8px;height:3px;background:#e8e8e8;"></div>
<div class="t" style="top:874.85px;font-size:14px;color:#e8e8e8;font-weight:700;left:1108.2px;">en</div>
<div class="t" style="top:874.85px;font-size:14px;color:#e8e8e8;font-weight:700;left:1168.3px;">Пт, 28 марта&nbsp;&nbsp;21:25</div>
<svg style="left:1342px;top:874px;" width="16" height="15" viewBox="0 0 16 15"><g fill="#e6e6e6"><rect x="5.5" y="0.5" width="5" height="4.5" rx=".8"/><rect x="0.5" y="9.5" width="5" height="5" rx=".8"/><rect x="10.5" y="9.5" width="5" height="5" rx=".8"/></g><path d="M8 5V7.5M3 9.5V7.5H13V9.5" fill="none" stroke="#e6e6e6" stroke-width="1.2"/></svg>
<svg style="left:1369px;top:873px;" width="18" height="17" viewBox="0 0 18 17"><path d="M1.5 6H4.5L8.5 2V15L4.5 11H1.5Z" fill="none" stroke="#e6e6e6" stroke-width="1.1"/><path d="M11 6A3 3 0 0 1 11 11M13 3.5A6.5 6.5 0 0 1 13 13.5" fill="none" stroke="#e6e6e6" stroke-width="1.3"/></svg>
<svg style="left:1399px;top:874px;" width="15" height="15" viewBox="0 0 15 15"><path d="M4 3.5A5.8 5.8 0 1 0 11 3.5" fill="none" stroke="#e6e6e6" stroke-width="1.8"/><path d="M7.5 1V7.5" stroke="#e6e6e6" stroke-width="1.8"/></svg>
<div style="left:1431px;top:864.8px;width:1px;height:35.2px;background:#3e3a4c;"></div>
</body></html>
